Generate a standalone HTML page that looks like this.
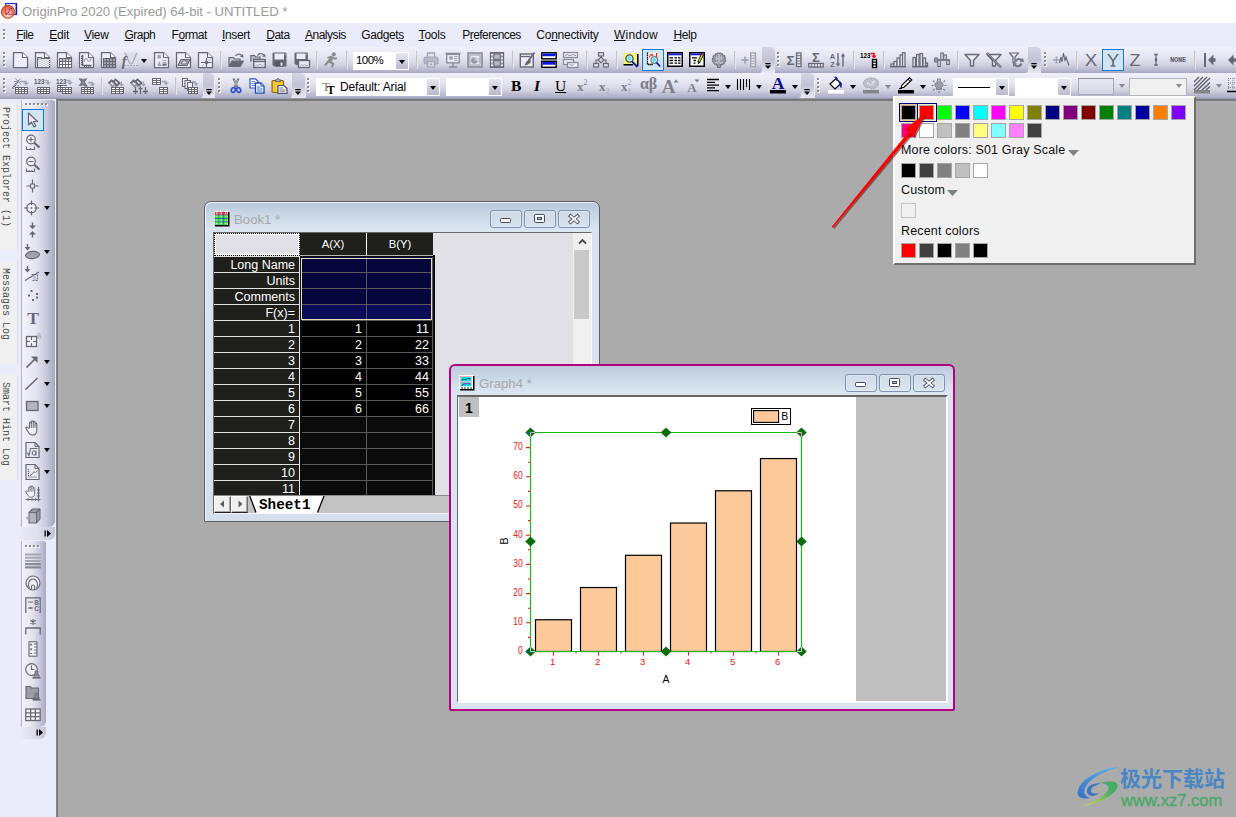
<!DOCTYPE html>
<html lang="en"><head><meta charset="utf-8"><title>OriginPro 2020</title>
<style>
*{box-sizing:border-box;margin:0;padding:0}
html,body{width:1236px;height:817px;overflow:hidden}
body{background:#ababab;font-family:"Liberation Sans",sans-serif;font-size:12px;color:#000;position:relative}
.abs{position:absolute}
.t{position:absolute;white-space:nowrap;line-height:1}
#title{left:0;top:0;width:1236px;height:23px;background:#fff}
#menu{left:0;top:23px;width:1236px;height:24px;background:#ebecf9}
.mi{position:absolute;top:6px;font-size:12px;line-height:12px;white-space:nowrap;color:#101010;transform-origin:0 0}
.mi u{text-decoration:underline;text-underline-offset:1px}
.tbrow{position:absolute;left:0;width:1236px}
.tb{position:absolute;top:0;height:100%;background:linear-gradient(#f0f0fa 0%,#e5e5f1 40%,#d0d0e0 70%,#b4b4cb 92%,#a6a6c0 100%);border-radius:0 0 3px 0}
.cap{position:absolute;top:0;width:13px;height:100%;background:linear-gradient(#d4d4e4 0%,#c2c2d6 50%,#e8e8f4 100%);border-radius:0 5px 0 0}
.grip{position:absolute;width:3px;background:repeating-linear-gradient(#fff 0 1px,transparent 1px 4px) 1px 1px/2px 100% no-repeat,repeating-linear-gradient(#8e8e86 0 2px,transparent 2px 4px) 0 0/2px 100% no-repeat}
.sep{position:absolute;width:1px;background:#c6c5c2;box-shadow:1px 0 0 #e6e6f0}
.ic{position:absolute;overflow:visible}
.combo{position:absolute;background:#fff;height:18px}
.combo .btn{position:absolute;right:1px;top:1px;width:12px;bottom:1px;background:linear-gradient(#e6e6f0,#b9b9cd);}
.combo .btn:after,.dd:after{content:"";position:absolute;left:2.5px;top:6.5px;border:3.5px solid transparent;border-top:4px solid #000;border-bottom:0}
.dd{position:absolute;width:7px;height:4px}
.dd:after{left:0;top:0}
.dd.g:after{border-top-color:#8a8a8a}
.hl{position:absolute;background:#d1e5f5;border:1.5px solid #0f7ad8}

#dock{left:0;top:99px;width:57px;height:718px;background:#ebecf9}
.vtab{position:absolute;left:0;width:18px;background:#f0f0f0;border-right:1px solid #dcdce4}
.vtab span{position:absolute;left:12px;top:6px;transform-origin:0 0;transform:rotate(90deg) scale(1,1.18);font-family:"Liberation Mono",monospace;font-size:10px;line-height:12px;white-space:nowrap;color:#4c4c4c;letter-spacing:0}
.vtb{position:absolute;background:linear-gradient(90deg,#f2f2fb 0%,#e6e6f2 40%,#c8c8dc 75%,#a6a6be 100%)}
.win{position:absolute;border-radius:7px 7px 1px 1px}
.wbtn{position:absolute;width:32px;height:18px;border:1px solid #8192b0;border-radius:3px;background:linear-gradient(rgba(255,255,255,.18),rgba(255,255,255,.02));box-shadow:inset 0 0 0 1px rgba(255,255,255,.25)}
.wt{position:absolute;font-size:13.2px;line-height:14px;color:#a9a9a9;white-space:nowrap}
table.ws{position:absolute;border-collapse:separate;border-spacing:0;font-family:"Liberation Sans",sans-serif;font-size:12px;color:#fff}
.sw{position:absolute;width:15px;height:15px;border:1px solid #a6a6a6}
.pt{position:absolute;font-size:12.5px;line-height:13px;white-space:nowrap;color:#111;letter-spacing:.17px}
</style></head>
<body>
<div id="title" class="abs"><svg class="ic" style="left:0;top:0" width="20" height="22" viewBox="0 0 20 22">
<defs><radialGradient id="og" cx=".5" cy=".8" r=".75"><stop offset="0" stop-color="#fff0ea"/><stop offset=".3" stop-color="#fbb09a"/><stop offset=".6" stop-color="#f8805e"/><stop offset="1" stop-color="#e85a3c"/></radialGradient></defs>
<rect x="5.500" y="3.500" width="11" height="11" fill="#fff" stroke="#2434c4" stroke-width="1.200"/>
<path d="M16.300 3.500V14.500" stroke="#1018b0" stroke-width="1.600"/>
<path d="M9 4V14M12.500 4V14M6 7H16M6 10.500H16" stroke="#a8c8f4" stroke-width=".9"/>
<circle cx="7.900" cy="11.800" r="6.500" fill="url(#og)" stroke="#a83014" stroke-width=".9"/>
<path d="M5.400 6.500V14.300H13" fill="none" stroke="#e04630" stroke-width="1"/>
<circle cx="6.500" cy="13.500" r=".65" fill="#2434b4"/><circle cx="8.400" cy="12.400" r=".65" fill="#2434b4"/><circle cx="9.500" cy="9.500" r=".65" fill="#2434b4"/><circle cx="11.400" cy="8.500" r=".65" fill="#2434b4"/>
<path d="M6.500 13.500L8.400 12.400L9.500 9.500L11.400 8.500" fill="none" stroke="#5a50b8" stroke-width=".5"/>
</svg><span class="t" id="ttl" style="left:22px;top:5px;font-size:13.2px;color:#9a9a9a;letter-spacing:-0.05px">OriginPro 2020 (Expired) 64-bit - UNTITLED *</span></div>
<div id="menu" class="abs"><svg class="ic" style="left:3px;top:6px" width="3" height="12" viewBox="0 0 3 12"><rect x="1" y="1" width="2" height="2" fill="#fff"/><rect x="0" y="0" width="2" height="2" fill="#8c8c86"/><rect x="1" y="5" width="2" height="2" fill="#fff"/><rect x="0" y="4" width="2" height="2" fill="#8c8c86"/><rect x="1" y="9" width="2" height="2" fill="#fff"/><rect x="0" y="8" width="2" height="2" fill="#8c8c86"/></svg><span class="mi" id="m0" style="left:16.3px;letter-spacing:-0.550px"><u>F</u>ile</span><span class="mi" id="m1" style="left:49.3px;letter-spacing:-0.200px"><u>E</u>dit</span><span class="mi" id="m2" style="left:84px;letter-spacing:-0.300px"><u>V</u>iew</span><span class="mi" id="m3" style="left:124.5px;letter-spacing:-0.520px"><u>G</u>raph</span><span class="mi" id="m4" style="left:171.6px;letter-spacing:-0.467px">F<u>o</u>rmat</span><span class="mi" id="m5" style="left:222px;letter-spacing:-0.333px"><u>I</u>nsert</span><span class="mi" id="m6" style="left:266.3px;letter-spacing:-0.525px"><u>D</u>ata</span><span class="mi" id="m7" style="left:304.9px;letter-spacing:-0.463px"><u>A</u>nalysis</span><span class="mi" id="m8" style="left:361.2px;letter-spacing:-0.386px">Gadget<u>s</u></span><span class="mi" id="m9" style="left:418.6px;letter-spacing:-0.220px"><u>T</u>ools</span><span class="mi" id="m10" style="left:462.3px;letter-spacing:-0.573px">P<u>r</u>eferences</span><span class="mi" id="m11" style="left:536.3px;letter-spacing:-0.258px">Co<u>n</u>nectivity</span><span class="mi" id="m12" style="left:614px;letter-spacing:0.217px"><u>W</u>indow</span><span class="mi" id="m13" style="left:673.4px;letter-spacing:-0.400px"><u>H</u>elp</span></div>
<div class="tbrow" style="top:47px;height:26px;background:#e9e9f5"><div class="tb" style="left:0;width:762px"></div><div class="cap" style="left:762px;width:13px"></div><svg class="ic" style="left:765px;top:16px" width="6" height="6" viewBox="0 0 6 6"><path d="M0.300 0H5.700V1.300H0.300Z M0 2.600H6L3 6Z" fill="#000"/></svg><svg class="ic" style="left:3px;top:5px" width="3" height="16" viewBox="0 0 3 16"><rect x="1" y="1" width="2" height="2" fill="#fff"/><rect x="0" y="0" width="2" height="2" fill="#8c8c86"/><rect x="1" y="5" width="2" height="2" fill="#fff"/><rect x="0" y="4" width="2" height="2" fill="#8c8c86"/><rect x="1" y="9" width="2" height="2" fill="#fff"/><rect x="0" y="8" width="2" height="2" fill="#8c8c86"/><rect x="1" y="13" width="2" height="2" fill="#fff"/><rect x="0" y="12" width="2" height="2" fill="#8c8c86"/></svg><svg class="ic" style="left:13px;top:5px" width="16" height="16" viewBox="0 0 16 16"><path d="M0.5 0.5H9.5L14.5 5.5V15.5H0.5Z" fill="#eeeefa" stroke="#686874" stroke-width="1.25"/><path d="M9.5 0.5V5.5H14.5" fill="#f8f8fd" stroke="#686874" stroke-width="1.1"/></svg><svg class="ic" style="left:35px;top:5px" width="16" height="16" viewBox="0 0 16 16"><path d="M0.5 0.5H9.5L14.5 5.5V15.5H0.5Z" fill="#eeeefa" stroke="#686874" stroke-width="1.25"/><path d="M9.5 0.5V5.5H14.5" fill="#f8f8fd" stroke="#686874" stroke-width="1.1"/><path d="M2.500 15.500V5.500H6.500V6.500H14.500V15.500Z" fill="#cacad4" stroke="#686874" stroke-width="1.150"/><rect x="7" y="7" width="1" height="1" fill="#f6f6fb"/><rect x="10" y="7" width="1" height="1" fill="#f6f6fb"/><rect x="11" y="7" width="1" height="1" fill="#f6f6fb"/><rect x="14" y="7" width="1" height="1" fill="#f6f6fb"/><rect x="4" y="8" width="1" height="1" fill="#f6f6fb"/><rect x="5" y="8" width="1" height="1" fill="#f6f6fb"/><rect x="8" y="8" width="1" height="1" fill="#f6f6fb"/><rect x="9" y="8" width="1" height="1" fill="#f6f6fb"/><rect x="12" y="8" width="1" height="1" fill="#f6f6fb"/><rect x="13" y="8" width="1" height="1" fill="#f6f6fb"/><rect x="3" y="9" width="1" height="1" fill="#f6f6fb"/><rect x="6" y="9" width="1" height="1" fill="#f6f6fb"/><rect x="7" y="9" width="1" height="1" fill="#f6f6fb"/><rect x="10" y="9" width="1" height="1" fill="#f6f6fb"/><rect x="11" y="9" width="1" height="1" fill="#f6f6fb"/><rect x="14" y="9" width="1" height="1" fill="#f6f6fb"/><rect x="4" y="10" width="1" height="1" fill="#f6f6fb"/><rect x="5" y="10" width="1" height="1" fill="#f6f6fb"/><rect x="8" y="10" width="1" height="1" fill="#f6f6fb"/><rect x="9" y="10" width="1" height="1" fill="#f6f6fb"/><rect x="12" y="10" width="1" height="1" fill="#f6f6fb"/><rect x="13" y="10" width="1" height="1" fill="#f6f6fb"/><rect x="3" y="11" width="1" height="1" fill="#f6f6fb"/><rect x="6" y="11" width="1" height="1" fill="#f6f6fb"/><rect x="7" y="11" width="1" height="1" fill="#f6f6fb"/><rect x="10" y="11" width="1" height="1" fill="#f6f6fb"/><rect x="11" y="11" width="1" height="1" fill="#f6f6fb"/><rect x="14" y="11" width="1" height="1" fill="#f6f6fb"/><rect x="4" y="12" width="1" height="1" fill="#f6f6fb"/><rect x="5" y="12" width="1" height="1" fill="#f6f6fb"/><rect x="8" y="12" width="1" height="1" fill="#f6f6fb"/><rect x="9" y="12" width="1" height="1" fill="#f6f6fb"/><rect x="12" y="12" width="1" height="1" fill="#f6f6fb"/><rect x="13" y="12" width="1" height="1" fill="#f6f6fb"/><rect x="3" y="13" width="1" height="1" fill="#f6f6fb"/><rect x="6" y="13" width="1" height="1" fill="#f6f6fb"/><rect x="7" y="13" width="1" height="1" fill="#f6f6fb"/><rect x="10" y="13" width="1" height="1" fill="#f6f6fb"/><rect x="11" y="13" width="1" height="1" fill="#f6f6fb"/><rect x="14" y="13" width="1" height="1" fill="#f6f6fb"/><rect x="4" y="14" width="1" height="1" fill="#f6f6fb"/><rect x="5" y="14" width="1" height="1" fill="#f6f6fb"/><rect x="8" y="14" width="1" height="1" fill="#f6f6fb"/><rect x="9" y="14" width="1" height="1" fill="#f6f6fb"/><rect x="12" y="14" width="1" height="1" fill="#f6f6fb"/><rect x="13" y="14" width="1" height="1" fill="#f6f6fb"/></svg><svg class="ic" style="left:57px;top:5px" width="16" height="16" viewBox="0 0 16 16"><path d="M0.5 0.5H9.5L14.5 5.5V15.5H0.5Z" fill="#eeeefa" stroke="#686874" stroke-width="1.25"/><path d="M9.5 0.5V5.5H14.5" fill="#f8f8fd" stroke="#686874" stroke-width="1.1"/><rect x="2" y="6" width="13" height="10" fill="#686874"/><rect x="3" y="7" width="2" height="2" fill="#c4c4d0"/><rect x="6" y="7" width="2" height="2" fill="#c4c4d0"/><rect x="9" y="7" width="2" height="2" fill="#c4c4d0"/><rect x="12" y="7" width="2" height="2" fill="#c4c4d0"/><rect x="3" y="10" width="2" height="2" fill="#fff"/><rect x="6" y="10" width="2" height="2" fill="#fff"/><rect x="9" y="10" width="2" height="2" fill="#fff"/><rect x="12" y="10" width="2" height="2" fill="#fff"/><rect x="3" y="13" width="2" height="2" fill="#fff"/><rect x="6" y="13" width="2" height="2" fill="#fff"/><rect x="9" y="13" width="2" height="2" fill="#fff"/><rect x="12" y="13" width="2" height="2" fill="#fff"/></svg><svg class="ic" style="left:79px;top:5px" width="16" height="16" viewBox="0 0 16 16"><path d="M0.5 0.5H9.5L14.5 5.5V15.5H0.5Z" fill="#eeeefa" stroke="#686874" stroke-width="1.25"/><path d="M9.5 0.5V5.5H14.5" fill="#f8f8fd" stroke="#686874" stroke-width="1.1"/><path d="M3.500 3V13.500H12.500" fill="none" stroke="#686874" stroke-width="1.600"/><path d="M2 4.500H3M2 6.500H3M2 8.500H3M2 10.500H3M2 12.500H3M5.500 14V15M7.500 14V15M9.500 14V15M11.500 14V15" stroke="#686874" stroke-width="1"/><path d="M5 10C6 6 7.500 5.500 8.500 8S11 10 12.500 5.500" fill="none" stroke="#a0a0ae" stroke-width="1.100"/></svg><svg class="ic" style="left:101px;top:5px" width="16" height="16" viewBox="0 0 16 16"><path d="M0.5 0.5H9.5L14.5 5.5V15.5H0.5Z" fill="#eeeefa" stroke="#686874" stroke-width="1.25"/><path d="M9.5 0.5V5.5H14.5" fill="#f8f8fd" stroke="#686874" stroke-width="1.1"/><rect x="2" y="6" width="13" height="10" fill="#686874"/><rect x="3" y="7" width="2" height="2" fill="#a2a2ae"/><rect x="6" y="7" width="2" height="2" fill="#a2a2ae"/><rect x="9" y="7" width="2" height="2" fill="#a2a2ae"/><rect x="12" y="7" width="2" height="2" fill="#a2a2ae"/><rect x="3" y="10" width="2" height="2" fill="#a2a2ae"/><rect x="6" y="10" width="2" height="2" fill="#a2a2ae"/><rect x="9" y="10" width="2" height="2" fill="#a2a2ae"/><rect x="12" y="10" width="2" height="2" fill="#a2a2ae"/><rect x="3" y="13" width="2" height="2" fill="#a2a2ae"/><rect x="6" y="13" width="2" height="2" fill="#a2a2ae"/><rect x="9" y="13" width="2" height="2" fill="#a2a2ae"/><rect x="12" y="13" width="2" height="2" fill="#a2a2ae"/></svg><svg class="ic" style="left:121px;top:5px" width="18" height="16" viewBox="0 0 18 16"><rect x="3" y="0.500" width="14" height="14" fill="#dedeea"/><path d="M3.500 1C6 1 7 12 10 12S14 1 16.500 1" fill="none" stroke="#a4a4b2" stroke-width="1.200"/><path d="M3 13.500H17" stroke="#a4a4b2" stroke-width="1" stroke-dasharray="2 1"/><text x="3" y="14" font-family="Liberation Serif,serif" font-size="14" font-weight="bold" text-anchor="middle" fill="#686874" font-style="italic">f</text></svg><div class="dd" style="left:141px;top:12px"></div><svg class="ic" style="left:154px;top:5px" width="16" height="16" viewBox="0 0 16 16"><path d="M0.5 0.5H9.5L14.5 5.5V15.5H0.5Z" fill="#eeeefa" stroke="#686874" stroke-width="1.25"/><path d="M9.5 0.5V5.5H14.5" fill="#f8f8fd" stroke="#686874" stroke-width="1.1"/><rect x="3.5" y="3" width="3.5" height="3.500" fill="#a4a4b2"/><path d="M3.5 13L5.5 9L7 13Z" fill="#a4a4b2"/><path d="M8.5 8.500H12.500M8.5 10.500H12.500M3.5 13.500H12.500" stroke="#a4a4b2" stroke-width="1.1"/><rect x="8.5" y="11.5" width="4" height="2" fill="#686874"/></svg><svg class="ic" style="left:176px;top:5px" width="16" height="16" viewBox="0 0 16 16"><path d="M0.5 0.5H9.5L14.5 5.5V15.5H0.5Z" fill="#eeeefa" stroke="#686874" stroke-width="1.25"/><path d="M9.5 0.5V5.5H14.5" fill="#f8f8fd" stroke="#686874" stroke-width="1.1"/><path d="M5 7.500H14L11 13.500H2Z" fill="#c4c4d0" stroke="#686874" stroke-width="1.2"/><path d="M6.5 9H11.500L10 12H5Z" fill="#e6e6f0" stroke="#686874" stroke-width="1"/></svg><svg class="ic" style="left:198px;top:5px" width="16" height="16" viewBox="0 0 16 16"><path d="M0.5 0.5H9.5L14.5 5.5V15.5H0.5Z" fill="#eeeefa" stroke="#686874" stroke-width="1.25"/><path d="M9.5 0.5V5.5H14.5" fill="#f8f8fd" stroke="#686874" stroke-width="1.1"/><path d="M8.5 6V15M3 10.500H13.500" stroke="#686874" stroke-width="1.1"/><circle cx="8.500" cy="10.500" r="1.500" fill="none" stroke="#686874" stroke-width="1"/><path d="M10.500 8.500L13 6.500M4 14L6 12.500" stroke="#a4a4b2" stroke-width="1.2" stroke-dasharray="1 1"/></svg><div class="sep" style="left:220px;top:4px;height:18px"></div><svg class="ic" style="left:228px;top:5px" width="16" height="16" viewBox="0 0 16 16"><path d="M1 14.500V5.500H5.500L6.500 7H12V9" fill="#c6c6d2" stroke="#686874" stroke-width="1.200"/><path d="M1 14.500L4 9H15.500L12.500 14.500Z" fill="#686874" stroke="#686874" stroke-width="1"/><path d="M7.500 4C9 1.500 12 1.500 13.500 3.500" fill="none" stroke="#686874" stroke-width="1.300"/><path d="M12 4.800L15.500 5.500L15 2Z" fill="#686874"/></svg><svg class="ic" style="left:250px;top:5px" width="16" height="16" viewBox="0 0 16 16"><path d="M0.800 9.500V3.500H4.500L5.500 5H10V7" fill="#b4b4c2" stroke="#686874" stroke-width="1.200"/><path d="M7.500 3.500C9 1.200 12 1.200 13.500 3" fill="none" stroke="#686874" stroke-width="1.300"/><path d="M12 4.500L15.500 5L15 1.800Z" fill="#686874"/><rect x="3.700" y="7.500" width="11.600" height="8" fill="#e8e8f2" stroke="#686874" stroke-width="1.400"/><path d="M3.700 9.500H15.300" stroke="#686874" stroke-width="1.300"/><path d="M5.500 14L7 12.500L8.500 13.500L10 12L11.500 13.500L13.500 13" fill="none" stroke="#a4a4b2" stroke-width=".9"/></svg><svg class="ic" style="left:272px;top:5px" width="16" height="16" viewBox="0 0 16 16"><path d="M0.500 1.500Q0.500 0.500 1.500 0.500H13.500Q14.500 0.500 14.500 1.500V14.500H2L0.500 13Z" fill="#686874"/><rect x="2.500" y="1.500" width="9.500" height="6" fill="#ececf6"/><rect x="3.500" y="9.500" width="8" height="5" fill="#54545f"/><rect x="8.500" y="10.500" width="2" height="3.200" fill="#e4e4ee"/><rect x="12.800" y="1.800" width="1" height="1.200" fill="#d8d8e4"/></svg><svg class="ic" style="left:294px;top:5px" width="16" height="16" viewBox="0 0 16 16"><path d="M0.500 1.500Q0.500 0.500 1.500 0.500H13Q14 0.500 14 1.500V13H2L0.500 11.500Z" fill="#686874"/><rect x="2.500" y="1.500" width="9" height="5.500" fill="#ececf6"/><rect x="12.300" y="1.800" width="1" height="1.200" fill="#d8d8e4"/><rect x="4.500" y="8.500" width="11" height="7" fill="#e8e8f2" stroke="#686874" stroke-width="1.300"/><path d="M6 14L7.500 12.800L9 13.600L10.500 12.500L12 13.600L14 13.200" fill="none" stroke="#a4a4b2" stroke-width=".9"/></svg><div class="sep" style="left:316px;top:4px;height:18px"></div><svg class="ic" style="left:323px;top:5px" width="16" height="16" viewBox="0 0 16 16"><circle cx="10.800" cy="2.300" r="2.100" fill="#8e8e8e"/><path d="M4 5L8.500 3.800L11.500 5.500L13.500 5.200L14.500 6.800L11.800 7.800L10 7L8.800 9.500L11.500 11.500L10 15.500H7.800L8.800 12.300L5.800 10.800L3.500 13.500H0.800L4.500 8.800L6.500 5.800L4.800 6.800Z" fill="#8e8e8e"/></svg><div class="sep" style="left:346px;top:4px;height:18px"></div><div class="combo" style="left:353px;top:5px;width:56px;height:18px"><span class="t" style="left:3px;top:3px;font-size:11.5px;letter-spacing:-0.55px">100%</span><div class="btn"></div></div><div class="sep" style="left:416px;top:4px;height:18px"></div><svg class="ic" style="left:423px;top:5px" width="16" height="16" viewBox="0 0 16 16"><path d="M4.500 5V1H11.500V5" fill="#e4e4ee" stroke="#a4a4b2" stroke-width="1.300"/><rect x="1" y="5" width="14" height="7" rx="2" fill="#b9b9c6" stroke="#a4a4b2" stroke-width="1.200"/><rect x="4.500" y="9.500" width="7" height="5.500" fill="#d8d8e4" stroke="#a4a4b2" stroke-width="1.200"/><rect x="7" y="11.500" width="2" height="1.500" fill="#a4a4b2"/></svg><svg class="ic" style="left:445px;top:5px" width="16" height="16" viewBox="0 0 16 16"><path d="M0.500 1.500H15.500" stroke="#8a8a96" stroke-width="1.600"/><rect x="1.700" y="2.300" width="12.600" height="8.500" fill="#e9e9f3" stroke="#8a8a96" stroke-width="1.300"/><circle cx="6" cy="6" r="2" fill="#a4a4b2"/><path d="M9 4.500H12.500M9 6.500H12.500M9 8.500H12.500" stroke="#a4a4b2" stroke-width="1"/><path d="M8 10.800V14.500M4 15H12" stroke="#8a8a96" stroke-width="1.500"/></svg><svg class="ic" style="left:467px;top:5px" width="16" height="16" viewBox="0 0 16 16"><rect x="1" y="1" width="14" height="14" fill="#d8d8e2" stroke="#8c8c98" stroke-width="1.600"/><rect x="3" y="3" width="10" height="10" fill="#e6e6f0" stroke="#a6a6b2" stroke-width="1"/><circle cx="7.300" cy="8.500" r="3.200" fill="#9a9aa6"/><path d="M7.300 8.500V5.300A3.200 3.200 0 0 1 10.500 8.500Z" fill="#c8c8d4"/><path d="M11.500 7H12.500M11.500 9.500H12.500" stroke="#8c8c98" stroke-width="1"/></svg><svg class="ic" style="left:489px;top:5px" width="16" height="16" viewBox="0 0 16 16"><rect x="1.500" y="0.700" width="13" height="14.600" fill="#9e9eab" stroke="#686874" stroke-width="1.300"/><rect x="4.800" y="2" width="6.400" height="5.300" fill="#b9b9c6" stroke="#686874" stroke-width="1"/><rect x="4.800" y="8.700" width="6.400" height="5.300" fill="#b9b9c6" stroke="#686874" stroke-width="1"/><path d="M2.200 2H3.800V3.600H2.200ZM2.200 5.600H3.800V7.200H2.200ZM2.200 9H3.800V10.600H2.200ZM2.200 12.400H3.800V14H2.200ZM12.200 2H13.800V3.600H12.200ZM12.200 5.600H13.800V7.200H12.200ZM12.200 9H13.800V10.600H12.200ZM12.200 12.400H13.800V14H12.200Z" fill="#fff"/></svg><div class="sep" style="left:512px;top:4px;height:18px"></div><svg class="ic" style="left:519px;top:5px" width="16" height="16" viewBox="0 0 16 16"><rect x="1.300" y="2" width="13" height="13" fill="#ebebf5" stroke="#686874" stroke-width="1.400"/><path d="M1.300 4.500H11" stroke="#686874" stroke-width="1.300"/><path d="M15.500 0.500L9.500 8.500" stroke="#686874" stroke-width="1.800"/><path d="M10.500 7.500C8 8 6.500 10.500 5.500 13.500C9 13 11.500 11.500 12 9Z" fill="#686874"/></svg><svg class="ic" style="left:541px;top:5px" width="16" height="16" viewBox="0 0 16 16"><rect x="0.800" y="0.800" width="14.400" height="6" fill="#fff" stroke="#000" stroke-width="1.400"/><rect x="1.500" y="1.500" width="13" height="2.700" fill="#0a18d8"/><rect x="0.800" y="9.300" width="14.400" height="6" fill="#fff" stroke="#000" stroke-width="1.400"/><rect x="1.500" y="10" width="13" height="2.700" fill="#0a18d8"/></svg><svg class="ic" style="left:563px;top:5px" width="16" height="16" viewBox="0 0 16 16"><rect x="0.500" y="0.500" width="14" height="5" fill="#ececf6" stroke="#8a8a96" stroke-width="1.200"/><path d="M2 3.500L4.500 2.500L7 3.800L9.500 2.500L13 3.500" fill="none" stroke="#8a8a96" stroke-width=".9"/><rect x="0.500" y="7.500" width="10" height="5" fill="#ececf6" stroke="#8a8a96" stroke-width="1.200"/><rect x="4.500" y="10.500" width="10.500" height="5" fill="#ececf6" stroke="#8a8a96" stroke-width="1.200"/><path d="M6 11.500L8.500 14L11 11.500" fill="none" stroke="#8a8a96" stroke-width=".9"/></svg><div class="sep" style="left:586px;top:4px;height:18px"></div><svg class="ic" style="left:593px;top:5px" width="16" height="16" viewBox="0 0 16 16"><rect x="5.500" y="0.700" width="5" height="3.300" fill="#e4e4ee" stroke="#686874" stroke-width="1.200"/><path d="M8 4V5" stroke="#686874" stroke-width="1.200"/><path d="M8 5L11 8L8 11L5 8Z" fill="#d4d4de" stroke="#686874" stroke-width="1.100"/><path d="M5 8H3V11.500M11 8H13V11.500" fill="none" stroke="#686874" stroke-width="1.200"/><rect x="0.700" y="11.500" width="4.800" height="3.500" fill="#e4e4ee" stroke="#686874" stroke-width="1.200"/><rect x="10.500" y="11.500" width="4.800" height="3.500" fill="#e4e4ee" stroke="#686874" stroke-width="1.200"/></svg><div class="sep" style="left:616px;top:4px;height:18px"></div><svg class="ic" style="left:623px;top:5px" width="16" height="16" viewBox="0 0 16 16"><rect x="1" y="1.500" width="13" height="10.500" fill="#f7f48c" stroke="#f0ea30" stroke-width="1" stroke-dasharray="1 1"/><path d="M0.500 12.800H10M14.800 2V14" stroke="#000" stroke-width="1.500"/><circle cx="6.500" cy="6.500" r="3.600" fill="#c4f6f8" stroke="#505050" stroke-width="1.300"/><circle cx="6.500" cy="6.500" r="2" fill="#6ce4ee"/><path d="M9 9.500L14.500 15" stroke="#0a18c0" stroke-width="1.800"/></svg><div class="hl" style="left:642px;top:2px;width:22px;height:22px"></div><svg class="ic" style="left:645px;top:5px" width="16" height="16" viewBox="0 0 16 16"><rect x="3" y="1" width="9" height="10" fill="#fff"/><path d="M2.500 0.500V12.500H8" fill="none" stroke="#000" stroke-width="1.300" stroke-dasharray="1.500 .6"/><path d="M4.500 5.500C5 2 7.500 1.500 8 4M11.500 1V6" fill="none" stroke="#f01818" stroke-width="1.200"/><circle cx="9.300" cy="8" r="3.300" fill="#a8f0f4" stroke="#808080" stroke-width="1.300"/><circle cx="9.300" cy="8" r="1.800" fill="#5ce0ec"/><path d="M11.500 10.500L15.200 14.500" stroke="#0a18c0" stroke-width="1.800"/></svg><svg class="ic" style="left:667px;top:5px" width="16" height="16" viewBox="0 0 16 16"><rect x="0.750" y="0.750" width="14.500" height="13.500" fill="#fff" stroke="#000" stroke-width="1.500"/><rect x="1.500" y="1.500" width="13" height="1.800" fill="#0a18d0"/><path d="M2.500 5.800H6M7.500 5.800H10M11 5.800H13.500M2.500 8.500H6M7.500 8.500H10M11 8.500H13.500M2.500 11.200H6M7.500 11.200H10M11 11.200H13.500" stroke="#000" stroke-width="1.300"/></svg><svg class="ic" style="left:689px;top:5px" width="16" height="16" viewBox="0 0 16 16"><rect x="0.750" y="0.750" width="14.500" height="13.500" fill="#fff" stroke="#000" stroke-width="1.500"/><rect x="1.500" y="1.500" width="13" height="1.800" fill="#0a18d0"/><path d="M3 5.800H8M4.500 8.500H7M4.500 11.200H6.500" stroke="#000" stroke-width="1.300"/><path d="M13.500 2.500L9.500 10.500" stroke="#000" stroke-width="3"/><path d="M13.300 3L10 9.500" stroke="#f0e020" stroke-width="1.500"/><circle cx="13.600" cy="2.300" r="1" fill="#e02020"/><path d="M9 10L8.800 12.500L10.500 11Z" fill="#000"/></svg><svg class="ic" style="left:711px;top:5px" width="16" height="16" viewBox="0 0 16 16"><path d="M8 1.500C6.500 0.500 4.500 1.500 4.300 3C2.500 3 1.300 4.800 2 6.300C0.800 7.500 1.300 9.800 2.800 10.300C2.800 12.300 4.800 13.300 6 12.500C6.800 14.300 9.200 14.300 10 12.500C11.200 13.300 13.200 12.300 13.200 10.300C14.700 9.800 15.200 7.500 14 6.300C14.700 4.800 13.500 3 11.700 3C11.500 1.500 9.500 0.500 8 1.500Z" fill="#9a9aa6" stroke="#72727e" stroke-width="1.300" stroke-dasharray="2.200 .600"/><path d="M8 2V11M5 4.500C6.500 5.500 6.500 7 5 8M11 4.500C9.500 5.500 9.500 7 11 8M4.500 10.500C6 10 6.500 11 6.500 12M11.500 10.500C10 10 9.500 11 9.500 12" fill="none" stroke="#dcdce6" stroke-width="1"/><path d="M6.500 12.500V15.500H9.500V12.500" fill="#9a9aa6" stroke="#72727e" stroke-width="1"/></svg><div class="sep" style="left:734px;top:4px;height:18px"></div><svg class="ic" style="left:741px;top:5px" width="16" height="16" viewBox="0 0 16 16"><path d="M0.500 8H7.500M4 4.500V11.500" stroke="#a4a4b2" stroke-width="1.800"/><rect x="9.700" y="1" width="4.800" height="13.500" fill="#ececf4" stroke="#a4a4b2" stroke-width="1.400"/><path d="M9.700 3.700H14.500M9.700 6.400H14.500M9.700 9.100H14.500M9.700 11.800H14.500" stroke="#a4a4b2" stroke-width="1.100"/></svg><div class="tb" style="left:775px;width:253px"></div><div class="cap" style="left:1028px;width:13px"></div><svg class="ic" style="left:1031px;top:16px" width="6" height="6" viewBox="0 0 6 6"><path d="M0.300 0H5.700V1.300H0.300Z M0 2.600H6L3 6Z" fill="#000"/></svg><svg class="ic" style="left:777px;top:5px" width="3" height="16" viewBox="0 0 3 16"><rect x="1" y="1" width="2" height="2" fill="#fff"/><rect x="0" y="0" width="2" height="2" fill="#8c8c86"/><rect x="1" y="5" width="2" height="2" fill="#fff"/><rect x="0" y="4" width="2" height="2" fill="#8c8c86"/><rect x="1" y="9" width="2" height="2" fill="#fff"/><rect x="0" y="8" width="2" height="2" fill="#8c8c86"/><rect x="1" y="13" width="2" height="2" fill="#fff"/><rect x="0" y="12" width="2" height="2" fill="#8c8c86"/></svg><svg class="ic" style="left:786px;top:5px" width="16" height="16" viewBox="0 0 16 16"><text x="4.5" y="13" font-family="Liberation Sans,sans-serif" font-size="13.5" font-weight="bold" text-anchor="middle" fill="#686874" >&#931;</text><rect x="10.500" y="1" width="4.500" height="13.500" fill="#ececf4" stroke="#686874" stroke-width="1.300"/><path d="M10.500 3.700H15M10.500 6.400H15M10.500 9.100H15M10.500 11.800H15" stroke="#686874" stroke-width="1"/></svg><svg class="ic" style="left:808px;top:5px" width="16" height="16" viewBox="0 0 16 16"><text x="8" y="10" font-family="Liberation Sans,sans-serif" font-size="13" font-weight="bold" text-anchor="middle" fill="#686874" >&#931;</text><rect x="0.800" y="11.500" width="14.400" height="3.500" fill="#ececf4" stroke="#686874" stroke-width="1.300"/><path d="M3.700 11.500V15M6.600 11.500V15M9.500 11.500V15M12.400 11.500V15" stroke="#686874" stroke-width="1"/></svg><svg class="ic" style="left:830px;top:5px" width="16" height="16" viewBox="0 0 16 16"><text x="2.5" y="7" font-family="Liberation Sans,sans-serif" font-size="7.5" font-weight="bold" text-anchor="middle" fill="#686874" >A</text><text x="2.5" y="14.5" font-family="Liberation Sans,sans-serif" font-size="7.5" font-weight="bold" text-anchor="middle" fill="#686874" >Z</text><path d="M8 1V13" stroke="#686874" stroke-width="1.400"/><path d="M5.800 11.500H10.200L8 14.800Z" fill="#686874"/><path d="M13 14.500V3" stroke="#686874" stroke-width="1.400"/><path d="M10.800 4.500H15.200L13 1Z" fill="#686874"/></svg><div class="sep" style="left:853px;top:4px;height:18px"></div><svg class="ic" style="left:860px;top:5px" width="16" height="16" viewBox="0 0 16 16"><text x="0" y="6" font-family="Liberation Sans,sans-serif" font-size="7.2" font-weight="bold" text-anchor="start" fill="#000" textLength="10.500" lengthAdjust="spacingAndGlyphs">123</text><path d="M10.500 1.500H14V4" fill="none" stroke="#e81010" stroke-width="1.500"/><path d="M11.300 3.500H16.700L14 6.500Z" fill="#e81010"/><rect x="12.500" y="7.500" width="4" height="8" fill="#fff" stroke="#000" stroke-width="1.400"/><path d="M12.500 10.200H16.500M12.500 12.900H16.500" stroke="#000" stroke-width="1.300"/></svg><div class="sep" style="left:883px;top:4px;height:18px"></div><svg class="ic" style="left:890px;top:5px" width="16" height="16" viewBox="0 0 16 16"><rect x="1" y="12" width="3" height="2.5" fill="#e4e4ee" stroke="#686874" stroke-width="1.200"/><rect x="4" y="9.5" width="3" height="5.0" fill="#e4e4ee" stroke="#686874" stroke-width="1.200"/><rect x="7" y="6" width="3" height="8.5" fill="#e4e4ee" stroke="#686874" stroke-width="1.200"/><rect x="10" y="3" width="3" height="11.5" fill="#e4e4ee" stroke="#686874" stroke-width="1.200"/><rect x="12.5" y="0.7" width="2.5" height="13.8" fill="#e4e4ee" stroke="#686874" stroke-width="1.200"/><path d="M0 14.800H16" stroke="#686874" stroke-width="1.200"/></svg><svg class="ic" style="left:912px;top:5px" width="16" height="16" viewBox="0 0 16 16"><rect x="1" y="5.5" width="2.5" height="9.0" fill="#e4e4ee" stroke="#686874" stroke-width="1.200"/><rect x="4.5" y="2.5" width="2.5" height="12.0" fill="#e4e4ee" stroke="#686874" stroke-width="1.200"/><rect x="8" y="1.5" width="2.5" height="13.0" fill="#e4e4ee" stroke="#686874" stroke-width="1.200"/><rect x="11" y="6" width="2.5" height="8.5" fill="#e4e4ee" stroke="#686874" stroke-width="1.200"/><rect x="13.5" y="11" width="2" height="3.5" fill="#e4e4ee" stroke="#686874" stroke-width="1.200"/><path d="M0 14.800H16" stroke="#686874" stroke-width="1.200"/></svg><svg class="ic" style="left:934px;top:5px" width="16" height="16" viewBox="0 0 16 16"><rect x="0.800" y="6" width="2.500" height="4" fill="#e4e4ee" stroke="#686874" stroke-width="1.100"/><rect x="3.800" y="8" width="2.500" height="6.500" fill="#e4e4ee" stroke="#686874" stroke-width="1.100"/><rect x="6.800" y="1" width="2.500" height="7" fill="#e4e4ee" stroke="#686874" stroke-width="1.100"/><rect x="9.800" y="3" width="2.500" height="5" fill="#e4e4ee" stroke="#686874" stroke-width="1.100"/><rect x="12.800" y="8" width="2.500" height="4.500" fill="#e4e4ee" stroke="#686874" stroke-width="1.100"/><path d="M0 8H16" stroke="#686874" stroke-width="1"/></svg><div class="sep" style="left:957px;top:4px;height:18px"></div><svg class="ic" style="left:964px;top:5px" width="16" height="16" viewBox="0 0 16 16"><path d="M1 2.5H15L9.5 8.5V14H6.5V8.5Z" fill="#ececf4" stroke="#686874" stroke-width="1.400" stroke-linejoin="round"/></svg><svg class="ic" style="left:986px;top:5px" width="16" height="16" viewBox="0 0 16 16"><path d="M1 2.5H15L9.5 8.5V14H6.5V8.5Z" fill="#ececf4" stroke="#686874" stroke-width="1.400" stroke-linejoin="round"/><path d="M1 1L15 15.500" stroke="#686874" stroke-width="2.200"/><path d="M1 1L15 15.500" stroke="#a8a8b4" stroke-width=".8"/></svg><svg class="ic" style="left:1008px;top:5px" width="16" height="16" viewBox="0 0 16 16"><path d="M1.500 1H10.500L7 5V10.500H5V5Z" fill="#ececf4" stroke="#686874" stroke-width="1.200" stroke-linejoin="round"/><path d="M7.500 9.500C9 6 13 6.500 14 9.500" fill="none" stroke="#787884" stroke-width="2"/><path d="M11.800 9.800L16 10L15 6Z" fill="#787884"/><path d="M13.500 11.500C12 15 8 15 6.500 12" fill="none" stroke="#787884" stroke-width="2"/><path d="M9 11.500L4.800 11L5.500 15Z" fill="#787884"/></svg><div class="tb" style="left:1041px;width:195px;border-radius:0"></div><svg class="ic" style="left:1044px;top:5px" width="3" height="16" viewBox="0 0 3 16"><rect x="1" y="1" width="2" height="2" fill="#fff"/><rect x="0" y="0" width="2" height="2" fill="#8c8c86"/><rect x="1" y="5" width="2" height="2" fill="#fff"/><rect x="0" y="4" width="2" height="2" fill="#8c8c86"/><rect x="1" y="9" width="2" height="2" fill="#fff"/><rect x="0" y="8" width="2" height="2" fill="#8c8c86"/><rect x="1" y="13" width="2" height="2" fill="#fff"/><rect x="0" y="12" width="2" height="2" fill="#8c8c86"/></svg><svg class="ic" style="left:1053px;top:5px" width="16" height="16" viewBox="0 0 16 16"><path d="M0 8H7M3.500 4.500V11.500" stroke="#a4a4b2" stroke-width="1.700"/><path d="M6.500 11L8 5L9 10L10.500 1L12 9L13 5L14 8L16 13.500" fill="none" stroke="#686874" stroke-width="1.100"/></svg><div class="sep" style="left:1076px;top:4px;height:18px"></div><svg class="ic" style="left:1083px;top:5px" width="16" height="16" viewBox="0 0 16 16"><text x="8" y="13.5" font-family="Liberation Sans,sans-serif" font-size="16" font-weight="normal" text-anchor="middle" fill="#686874" textLength="12.500" lengthAdjust="spacingAndGlyphs">X</text></svg><div class="hl" style="left:1102px;top:2px;width:22px;height:22px"></div><svg class="ic" style="left:1105px;top:5px" width="16" height="16" viewBox="0 0 16 16"><text x="8" y="13.5" font-family="Liberation Sans,sans-serif" font-size="16" font-weight="normal" text-anchor="middle" fill="#686874" textLength="12.500" lengthAdjust="spacingAndGlyphs">Y</text><path d="M5.500 14H10.500" stroke="#686874" stroke-width="1.400"/></svg><svg class="ic" style="left:1127px;top:5px" width="16" height="16" viewBox="0 0 16 16"><text x="8" y="13.5" font-family="Liberation Sans,sans-serif" font-size="16" font-weight="normal" text-anchor="middle" fill="#686874" textLength="11" lengthAdjust="spacingAndGlyphs">Z</text></svg><svg class="ic" style="left:1148px;top:5px" width="16" height="16" viewBox="0 0 16 16"><path d="M8 2.500V13M6.200 2.500H9.800M6.200 13H9.800" stroke="#686874" stroke-width="1.300"/><rect x="6.800" y="6.500" width="2.400" height="2.600" fill="#686874"/></svg><span class="t" style="left:1170px;top:10px;font-family:'Liberation Mono',monospace;font-weight:bold;font-size:7px;color:#5e5e6c;letter-spacing:-0.2px">NONE</span><div class="sep" style="left:1194px;top:4px;height:18px"></div><svg class="ic" style="left:1202px;top:5px" width="16" height="16" viewBox="0 0 16 16"><path d="M3 1V15" stroke="#686874" stroke-width="2"/><path d="M6 8L11.500 2.500V6.200H13.500V9.800H11.500V13.500Z" fill="#686874"/></svg><svg class="ic" style="left:1224px;top:5px" width="16" height="16" viewBox="0 0 16 16"><path d="M4 8L9.500 2.500V6.200H12V9.800H9.500V13.500Z" fill="#686874"/></svg></div>
<div class="tbrow" style="top:73px;height:25px;background:#e9e9f5"><div class="tb" style="left:0;width:203px"></div><div class="cap" style="left:203px;width:11px"></div><svg class="ic" style="left:206px;top:16px" width="6" height="6" viewBox="0 0 6 6"><path d="M0.300 0H5.700V1.300H0.300Z M0 2.600H6L3 6Z" fill="#000"/></svg><svg class="ic" style="left:3px;top:5px" width="3" height="16" viewBox="0 0 3 16"><rect x="1" y="1" width="2" height="2" fill="#fff"/><rect x="0" y="0" width="2" height="2" fill="#8c8c86"/><rect x="1" y="5" width="2" height="2" fill="#fff"/><rect x="0" y="4" width="2" height="2" fill="#8c8c86"/><rect x="1" y="9" width="2" height="2" fill="#fff"/><rect x="0" y="8" width="2" height="2" fill="#8c8c86"/><rect x="1" y="13" width="2" height="2" fill="#fff"/><rect x="0" y="12" width="2" height="2" fill="#8c8c86"/></svg><svg class="ic" style="left:12px;top:5px" width="16" height="16" viewBox="0 0 16 16"><path d="M0.500 10.500L7 2" stroke="#686874" stroke-width="1.700" stroke-dasharray="1.300 .500"/><path d="M3.500 0.500L9 6.500M8.500 0.500L5.500 4M2 3.500H5M7.500 3.500H9.500M6 7V9" stroke="#8a8a96" stroke-width=".9"/><path d="M9 3.5H14V5.5" fill="none" stroke="#a4a4b2" stroke-width="1.300"/><path d="M11 4.5H17L14 7.5Z" fill="#a4a4b2"/><rect x="3" y="9" width="13" height="7" fill="#686874"/><rect x="4" y="10" width="2" height="1" fill="#fff"/><rect x="7" y="10" width="2" height="1" fill="#fff"/><rect x="10" y="10" width="2" height="1" fill="#fff"/><rect x="13" y="10" width="2" height="1" fill="#fff"/><rect x="4" y="12" width="2" height="1" fill="#fff"/><rect x="7" y="12" width="2" height="1" fill="#fff"/><rect x="10" y="12" width="2" height="1" fill="#fff"/><rect x="13" y="12" width="2" height="1" fill="#fff"/><rect x="4" y="14" width="2" height="1" fill="#fff"/><rect x="7" y="14" width="2" height="1" fill="#fff"/><rect x="10" y="14" width="2" height="1" fill="#fff"/><rect x="13" y="14" width="2" height="1" fill="#fff"/></svg><svg class="ic" style="left:34px;top:5px" width="16" height="16" viewBox="0 0 16 16"><text x="0" y="6" font-family="Liberation Sans,sans-serif" font-size="7.2" font-weight="bold" text-anchor="start" fill="#55555f" textLength="10.500" lengthAdjust="spacingAndGlyphs">123</text><path d="M10.5 2.5H14V5" fill="none" stroke="#a4a4b2" stroke-width="1.300"/><path d="M11 4H17L14 7Z" fill="#a4a4b2"/><rect x="3" y="9" width="13" height="7" fill="#686874"/><rect x="4" y="10" width="2" height="1" fill="#fff"/><rect x="7" y="10" width="2" height="1" fill="#fff"/><rect x="10" y="10" width="2" height="1" fill="#fff"/><rect x="13" y="10" width="2" height="1" fill="#fff"/><rect x="4" y="12" width="2" height="1" fill="#fff"/><rect x="7" y="12" width="2" height="1" fill="#fff"/><rect x="10" y="12" width="2" height="1" fill="#fff"/><rect x="13" y="12" width="2" height="1" fill="#fff"/><rect x="4" y="14" width="2" height="1" fill="#fff"/><rect x="7" y="14" width="2" height="1" fill="#fff"/><rect x="10" y="14" width="2" height="1" fill="#fff"/><rect x="13" y="14" width="2" height="1" fill="#fff"/></svg><svg class="ic" style="left:56px;top:5px" width="16" height="16" viewBox="0 0 16 16"><text x="0" y="6" font-family="Liberation Sans,sans-serif" font-size="7.2" font-weight="bold" text-anchor="start" fill="#55555f" textLength="10.500" lengthAdjust="spacingAndGlyphs">123</text><path d="M10.5 2.5H14V5" fill="none" stroke="#a4a4b2" stroke-width="1.300"/><path d="M11 4H17L14 7Z" fill="#a4a4b2"/><rect x="1" y="7" width="10" height="7" fill="#686874"/><rect x="2" y="8" width="2" height="1" fill="#fff"/><rect x="5" y="8" width="2" height="1" fill="#fff"/><rect x="8" y="8" width="2" height="1" fill="#fff"/><rect x="2" y="10" width="2" height="1" fill="#fff"/><rect x="5" y="10" width="2" height="1" fill="#fff"/><rect x="8" y="10" width="2" height="1" fill="#fff"/><rect x="2" y="12" width="2" height="1" fill="#fff"/><rect x="5" y="12" width="2" height="1" fill="#fff"/><rect x="8" y="12" width="2" height="1" fill="#fff"/><rect x="5" y="8" width="11" height="1" fill="#eeeefa"/><rect x="6" y="9" width="10" height="7" fill="#686874"/><rect x="7" y="10" width="2" height="1" fill="#fff"/><rect x="10" y="10" width="2" height="1" fill="#fff"/><rect x="13" y="10" width="2" height="1" fill="#fff"/><rect x="7" y="12" width="2" height="1" fill="#fff"/><rect x="10" y="12" width="2" height="1" fill="#fff"/><rect x="13" y="12" width="2" height="1" fill="#fff"/><rect x="7" y="14" width="2" height="1" fill="#fff"/><rect x="10" y="14" width="2" height="1" fill="#fff"/><rect x="13" y="14" width="2" height="1" fill="#fff"/></svg><svg class="ic" style="left:78px;top:5px" width="16" height="16" viewBox="0 0 16 16"><path d="M0.500 0.500H4L10 8.500H6.500Z" fill="#686874"/><path d="M9.500 0.500H6L0.500 8H4Z" fill="#7c7c88"/><path d="M1.500 1L8.500 8" stroke="#9a9aa6" stroke-width=".7"/><path d="M10 4.5H14.5V6.5" fill="none" stroke="#a4a4b2" stroke-width="1.300"/><path d="M11.5 5.5H17.5L14.5 8.5Z" fill="#a4a4b2"/><rect x="3" y="9" width="13" height="7" fill="#686874"/><rect x="4" y="10" width="2" height="1" fill="#fff"/><rect x="7" y="10" width="2" height="1" fill="#fff"/><rect x="10" y="10" width="2" height="1" fill="#fff"/><rect x="13" y="10" width="2" height="1" fill="#fff"/><rect x="4" y="12" width="2" height="1" fill="#fff"/><rect x="7" y="12" width="2" height="1" fill="#fff"/><rect x="10" y="12" width="2" height="1" fill="#fff"/><rect x="13" y="12" width="2" height="1" fill="#fff"/><rect x="4" y="14" width="2" height="1" fill="#fff"/><rect x="7" y="14" width="2" height="1" fill="#fff"/><rect x="10" y="14" width="2" height="1" fill="#fff"/><rect x="13" y="14" width="2" height="1" fill="#fff"/></svg><div class="sep" style="left:101px;top:4px;height:18px"></div><svg class="ic" style="left:112px;top:5px" width="16" height="16" viewBox="0 0 16 16"><g transform="translate(-4,0)"><path d="M0.500 5.500L3.500 2.500L5 4L7.500 1.500L11.500 5L9 7.500L7.500 6L6 4.500" fill="none" stroke="#686874" stroke-width="1.800" stroke-linejoin="miter"/><path d="M1.500 5.500L4.500 8.500L6 7L8.500 9" fill="none" stroke="#8e8e9a" stroke-width="1.600"/></g><path d="M9.500 3.500V7" stroke="#a4a4b2" stroke-width="1.300"/><path d="M6.800 6H12.200L9.500 8.800Z" fill="#a4a4b2"/><rect x="-1" y="9" width="13" height="7" fill="#686874"/><rect x="0" y="10" width="3" height="1" fill="#fff"/><rect x="4" y="10" width="3" height="1" fill="#fff"/><rect x="8" y="10" width="3" height="1" fill="#fff"/><rect x="0" y="12" width="3" height="1" fill="#fff"/><rect x="4" y="12" width="3" height="1" fill="#fff"/><rect x="8" y="12" width="3" height="1" fill="#fff"/><rect x="0" y="14" width="3" height="1" fill="#fff"/><rect x="4" y="14" width="3" height="1" fill="#fff"/><rect x="8" y="14" width="3" height="1" fill="#fff"/></svg><svg class="ic" style="left:134px;top:5px" width="16" height="16" viewBox="0 0 16 16"><g transform="translate(-4,0)"><path d="M0.500 5.500L3.500 2.500L5 4L7.500 1.500L11.500 5L9 7.500L7.500 6L6 4.500" fill="none" stroke="#686874" stroke-width="1.800" stroke-linejoin="miter"/><path d="M1.500 5.500L4.500 8.500L6 7L8.500 9" fill="none" stroke="#8e8e9a" stroke-width="1.600"/></g><path d="M9.500 3.500V7" stroke="#a4a4b2" stroke-width="1.300"/><path d="M6.800 6H12.200L9.500 8.800Z" fill="#a4a4b2"/><path d="M1.500 9V16M6.500 8.500V16M11.500 9V16" stroke="#686874" stroke-width="1.300"/><path d="M-1 13.500H4M4.500 10.500H8.500M9 13.500H14" stroke="#686874" stroke-width="1.700"/></svg><svg class="ic" style="left:152px;top:5px" width="16" height="16" viewBox="0 0 16 16"><rect x="0" y="0" width="9" height="7" fill="#686874"/><rect x="1" y="1" width="3" height="1" fill="#fff"/><rect x="5" y="1" width="3" height="1" fill="#fff"/><rect x="1" y="3" width="3" height="1" fill="#fff"/><rect x="5" y="3" width="3" height="1" fill="#fff"/><rect x="1" y="5" width="3" height="1" fill="#fff"/><rect x="5" y="5" width="3" height="1" fill="#fff"/><path d="M9.5 3.5H14V5.5" fill="none" stroke="#a4a4b2" stroke-width="1.300"/><path d="M11 4.5H17L14 7.5Z" fill="#a4a4b2"/><rect x="7" y="9" width="9" height="7" fill="#686874"/><rect x="8" y="10" width="3" height="1" fill="#fff"/><rect x="12" y="10" width="3" height="1" fill="#fff"/><rect x="8" y="12" width="3" height="1" fill="#fff"/><rect x="12" y="12" width="3" height="1" fill="#fff"/><rect x="8" y="14" width="3" height="1" fill="#fff"/><rect x="12" y="14" width="3" height="1" fill="#fff"/></svg><div class="sep" style="left:175px;top:4px;height:18px"></div><svg class="ic" style="left:182px;top:5px" width="16" height="16" viewBox="0 0 16 16"><path d="M0.500 0.500H5.500V8.500H0.500Z" fill="#f4f4fb" stroke="#686874" stroke-width="1.150"/><path d="M3 2.500H8.500V10.500H3Z" fill="#f4f4fb" stroke="#686874" stroke-width="1.150"/><path d="M5.500 4.500H10.500V12.500H5.500Z" fill="#f4f4fb" stroke="#686874" stroke-width="1.150"/><path d="M10.500 3.500C13.500 3.500 14 4.500 14 6" fill="none" stroke="#a4a4b2" stroke-width="1.300"/><path d="M11.300 5.200H16.700L14 8Z" fill="#a4a4b2"/><rect x="6" y="9" width="10" height="7" fill="#686874"/><rect x="7" y="10" width="2" height="1" fill="#fff"/><rect x="10" y="10" width="2" height="1" fill="#fff"/><rect x="13" y="10" width="2" height="1" fill="#fff"/><rect x="7" y="12" width="2" height="1" fill="#fff"/><rect x="10" y="12" width="2" height="1" fill="#fff"/><rect x="13" y="12" width="2" height="1" fill="#fff"/><rect x="7" y="14" width="2" height="1" fill="#fff"/><rect x="10" y="14" width="2" height="1" fill="#fff"/><rect x="13" y="14" width="2" height="1" fill="#fff"/></svg><div class="tb" style="left:215px;width:77px"></div><div class="cap" style="left:292px;width:13px"></div><svg class="ic" style="left:295px;top:16px" width="6" height="6" viewBox="0 0 6 6"><path d="M0.300 0H5.700V1.300H0.300Z M0 2.600H6L3 6Z" fill="#000"/></svg><svg class="ic" style="left:218px;top:5px" width="3" height="16" viewBox="0 0 3 16"><rect x="1" y="1" width="2" height="2" fill="#fff"/><rect x="0" y="0" width="2" height="2" fill="#8c8c86"/><rect x="1" y="5" width="2" height="2" fill="#fff"/><rect x="0" y="4" width="2" height="2" fill="#8c8c86"/><rect x="1" y="9" width="2" height="2" fill="#fff"/><rect x="0" y="8" width="2" height="2" fill="#8c8c86"/><rect x="1" y="13" width="2" height="2" fill="#fff"/><rect x="0" y="12" width="2" height="2" fill="#8c8c86"/></svg><svg class="ic" style="left:228px;top:5px" width="16" height="16" viewBox="0 0 16 16"><path d="M5.500 0.500L9.300 9M10.500 0.500L6.700 9" stroke="#70707a" stroke-width="1.900"/><path d="M6.200 2L8.500 7.500M9.800 2L7.500 7.500" stroke="#c8c8d0" stroke-width=".7"/><ellipse cx="5.300" cy="12" rx="1.900" ry="2.500" fill="none" stroke="#2a55d0" stroke-width="1.700" transform="rotate(25 5.300 12)"/><ellipse cx="10.700" cy="12" rx="1.900" ry="2.500" fill="none" stroke="#2a55d0" stroke-width="1.700" transform="rotate(-25 10.700 12)"/></svg><svg class="ic" style="left:249px;top:5px" width="16" height="16" viewBox="0 0 16 16"><path d="M1 0.800H6.500L9 3.300V10H1Z" fill="#fff" stroke="#2a55c0" stroke-width="1.200"/><path d="M2.500 3.500H6M2.500 5.500H7.500M2.500 7.500H7.500" stroke="#5a88e0" stroke-width="1"/><path d="M6.500 5H12L15 8V15.200H6.500Z" fill="#fff" stroke="#1a45b0" stroke-width="1.300"/><path d="M12 5V8H15" fill="#cfe0fa" stroke="#1a45b0" stroke-width="1"/><path d="M8 9H11.500M8 11H13.500M8 13H13.500" stroke="#3a70e0" stroke-width="1.100"/></svg><svg class="ic" style="left:271px;top:5px" width="16" height="16" viewBox="0 0 16 16"><rect x="1" y="2.500" width="11.500" height="12" rx="1" fill="#e6b422" stroke="#8a6a10" stroke-width="1.100"/><rect x="2" y="3.500" width="9.500" height="10" fill="#f2c838"/><path d="M4.500 3.500V1.800H6C6 0 8 0 8 1.800H9.500V3.500Z" fill="#b8b8c0" stroke="#606068" stroke-width=".9"/><path d="M7 7.500H13L16 10.500V15.500H7Z" fill="#f4f4fa" stroke="#50506a" stroke-width="1.200"/><path d="M8.500 10H12M8.500 12H14.500M8.500 13.800H14.500" stroke="#7a7a9a" stroke-width="1"/></svg><div class="tb" style="left:306px;width:495px"></div><div class="cap" style="left:801px;width:13px"></div><svg class="ic" style="left:804px;top:16px" width="6" height="6" viewBox="0 0 6 6"><path d="M0.300 0H5.700V1.300H0.300Z M0 2.600H6L3 6Z" fill="#000"/></svg><svg class="ic" style="left:307px;top:5px" width="3" height="16" viewBox="0 0 3 16"><rect x="1" y="1" width="2" height="2" fill="#fff"/><rect x="0" y="0" width="2" height="2" fill="#8c8c86"/><rect x="1" y="5" width="2" height="2" fill="#fff"/><rect x="0" y="4" width="2" height="2" fill="#8c8c86"/><rect x="1" y="9" width="2" height="2" fill="#fff"/><rect x="0" y="8" width="2" height="2" fill="#8c8c86"/><rect x="1" y="13" width="2" height="2" fill="#fff"/><rect x="0" y="12" width="2" height="2" fill="#8c8c86"/></svg><div class="combo" style="left:316px;top:5px;width:124px;height:18px"><svg class="ic" style="left:7px;top:3px" width="13" height="13" viewBox="0 0 13 13"><text x="-1" y="10" font-family="Liberation Serif,serif" font-size="13.500" fill="#808080">T</text><text x="4" y="13" font-family="Liberation Serif,serif" font-weight="bold" font-size="11.500" fill="#000">T</text></svg><span class="t" style="left:24px;top:3px;font-size:12px;letter-spacing:-0.15px">Default: Arial</span><div class="btn"></div></div><div class="combo" style="left:446px;top:5px;width:56px;height:18px"><div class="btn"></div></div><span class="t" style="left:511px;top:5px;font-family:'Liberation Serif',serif;font-weight:bold;font-size:15.5px">B</span><span class="t" style="left:534px;top:5px;font-family:'Liberation Serif',serif;font-weight:bold;font-style:italic;font-size:15.5px">I</span><span class="t" style="left:555px;top:5px;font-family:'Liberation Serif',serif;font-size:15.5px;text-decoration:underline;text-underline-offset:1px">U</span><span class="t" style="left:577px;top:7px;font-family:'Liberation Serif',serif;font-weight:bold;font-size:13px;color:#7d7d8a">x<span style="font-size:8px;font-weight:normal;position:relative;top:-6px;left:0px">2</span></span><span class="t" style="left:599px;top:7px;font-family:'Liberation Serif',serif;font-weight:bold;font-size:13px;color:#7d7d8a">x<span style="font-size:8px;font-weight:normal;position:relative;top:3px;color:#aaa">2</span></span><span class="t" style="left:621px;top:7px;font-family:'Liberation Serif',serif;font-weight:bold;font-size:13px;color:#7d7d8a">x<span style="font-size:8px;font-weight:normal;position:relative;top:-6px;color:#999">2</span><span style="font-size:8px;font-weight:normal;position:relative;top:3px;left:-4px;color:#aaa">1</span></span><span class="t" style="left:640px;top:3px;font-family:'Liberation Serif',serif;font-weight:bold;font-size:16px;color:#7d7d8a;letter-spacing:-0.3px">αβ</span><svg class="ic" style="left:662px;top:5px" width="16" height="16" viewBox="0 0 16 16"><text x="6.500" y="14.500" text-anchor="middle" font-family="Liberation Serif,serif" font-weight="bold" font-size="19" fill="#80808c">A</text><path d="M11.500 4.500H16.500L14 1.500Z" fill="#80808c"/></svg><svg class="ic" style="left:686px;top:5px" width="16" height="16" viewBox="0 0 16 16"><text x="6" y="13.500" text-anchor="middle" font-family="Liberation Serif,serif" font-weight="bold" font-size="13" fill="#80808c">A</text><path d="M8.500 1.500H13.500L11 4.500Z" fill="#80808c"/></svg><svg class="ic" style="left:707px;top:5px" width="13" height="14" viewBox="0 0 13 14"><path d="M0 1.500H12M0 4.300H8M0 7.100H12M0 9.900H8M0 12.700H12" stroke="#000" stroke-width="1.300"/></svg><div class="dd" style="left:725px;top:12px"></div><svg class="ic" style="left:737px;top:5px" width="14" height="14" viewBox="0 0 14 14"><path d="M0.500 1V12M3.500 1V12M6.500 1V12M9.500 1V9M12.500 1V12" stroke="#000" stroke-width="1.100"/></svg><div class="dd" style="left:756px;top:12px"></div><svg class="ic" style="left:770px;top:4px" width="16" height="16" viewBox="0 0 16 16"><text x="8" y="12" text-anchor="middle" font-family="Liberation Serif,serif" font-weight="bold" font-size="17.500" fill="#0a0a8c">A</text><rect x="0" y="13" width="16" height="3.500" fill="#000"/></svg><div class="dd" style="left:792px;top:12px"></div><div class="tb" style="left:815px;width:421px;border-radius:0"></div><svg class="ic" style="left:817px;top:5px" width="3" height="16" viewBox="0 0 3 16"><rect x="1" y="1" width="2" height="2" fill="#fff"/><rect x="0" y="0" width="2" height="2" fill="#8c8c86"/><rect x="1" y="5" width="2" height="2" fill="#fff"/><rect x="0" y="4" width="2" height="2" fill="#8c8c86"/><rect x="1" y="9" width="2" height="2" fill="#fff"/><rect x="0" y="8" width="2" height="2" fill="#8c8c86"/><rect x="1" y="13" width="2" height="2" fill="#fff"/><rect x="0" y="12" width="2" height="2" fill="#8c8c86"/></svg><svg class="ic" style="left:828px;top:4px" width="16" height="16" viewBox="0 0 16 16"><path d="M2 7L8 1.500L13 6.500L7 12Z" fill="#fff" stroke="#000" stroke-width="1.200"/><path d="M6.500 0.500C8 -0.500 9.500 0.500 9 4" fill="none" stroke="#0a18a0" stroke-width="1.300"/><path d="M11 4.500C13.500 5 14 7.500 13 10.500C12 8.500 12 7 11.500 6Z" fill="#0a2098" stroke="#0a2098" stroke-width=".8"/><rect x="0" y="13" width="16" height="3.500" fill="#fff"/></svg><div class="dd" style="left:850px;top:12px"></div><svg class="ic" style="left:863px;top:4px" width="16" height="16" viewBox="0 0 16 16"><path d="M8 1C3 1 0.500 4 0.500 6.500C0.500 9.500 3.500 11 6 10.500C7.500 10.200 7.500 11.800 9 11.800C12.500 11.800 15.500 9 15.500 5.500C15.500 2.500 12 1 8 1Z" fill="#c0c0c8" stroke="#a0a0a8" stroke-width="1" stroke-dasharray="1.500 .7"/><path d="M4 5.500L7 8M9 4L11 7.500M12 4L8 8" stroke="#e4e4ea" stroke-width="1.200"/><rect x="0" y="13" width="16" height="3.500" fill="#858585"/></svg><div class="dd g" style="left:885px;top:12px"></div><svg class="ic" style="left:898px;top:4px" width="16" height="16" viewBox="0 0 16 16"><path d="M3 11L4 8L11.500 0.800L13.800 3L6 10.200Z" fill="#fff" stroke="#000" stroke-width="1.100"/><path d="M10 2.300L12.300 4.500" stroke="#000" stroke-width="1"/><path d="M1 11.500H4" stroke="#000" stroke-width="1"/><rect x="0" y="13" width="16" height="3.500" fill="#000"/></svg><div class="dd" style="left:920px;top:12px"></div><svg class="ic" style="left:931px;top:4px" width="16" height="16" viewBox="0 0 16 16"><path d="M5.500 10.500C3 9 3.500 4.500 8 4.500S13 9 10.500 10.500V12.500H5.500Z" fill="#9c9ca8" stroke="#80808c" stroke-width="1"/><path d="M6.500 4.500V2H9.500V4.500" fill="#c4c4cc" stroke="#80808c" stroke-width="1"/><path d="M0.500 8.500H2.500M13.500 8.500H15.500M2 3.500L3.500 5M14 3.500L12.500 5M2 13.500L3.700 12M14 13.500L12.300 12M8 14V16" stroke="#80808c" stroke-width="1.100"/></svg><div class="combo" style="left:953px;top:5px;width:56px;height:18px"><div class="abs" style="left:5px;top:9px;width:32px;height:1px;background:#000"></div><div class="btn"></div></div><div class="combo" style="left:1015px;top:5px;width:56px;height:18px"><div class="btn"></div></div><div class="abs" style="left:1078px;top:5px;width:36px;height:17px;border:1px solid #a9a9b4;border-top-color:#8c8c98;background:linear-gradient(#e9e9f3,#d4d4e4)"></div><div class="dd g" style="left:1119px;top:11px"></div><div class="abs" style="left:1129px;top:5px;width:58px;height:18px;border:1px solid #b4b4b4;background:#f0f0f0"></div><div class="dd g" style="left:1176px;top:11px"></div><svg class="ic" style="left:1194px;top:4px" width="16" height="16" viewBox="0 0 16 16"><path d="M0 5L5 0M0 9L9 0M0 13L13 0M3.500 13L16 1M8 13L16 5.500M12 13L16 9.500" stroke="#606068" stroke-width="1.300"/><rect x="0" y="13" width="16" height="3.500" fill="#858585"/></svg><div class="dd g" style="left:1216px;top:11px"></div><svg class="ic" style="left:1227px;top:4px" width="16" height="16" viewBox="0 0 16 16"><path d="M1 1.500H16M1 6H16M1 10.500H16M1.500 1V12M6 1V12M10.500 1V12" stroke="#8a8a92" stroke-width="1" stroke-dasharray="1 1"/><path d="M0 14.500H16" stroke="#000" stroke-width="1.500"/></svg></div>
<div id="dock" class="abs"><div class="vtab" style="top:4px;height:147px"><span id="vt1" style="top:4px">Project Explorer (1)</span></div><div class="vtab" style="top:162px;height:103px"><span id="vt2" style="top:7px">Messages Log</span></div><div class="vtab" style="top:276px;height:105px"><span id="vt3" style="top:7px">Smart Hint Log</span></div><div class="vtb" style="left:21px;top:1px;width:34px;height:427px;border-radius:0 3px 6px 0;border-left:1px solid #b4b4c8"></div><div class="abs" style="left:20px;top:428px;width:35px;height:13px;border-radius:0 0 6px 0;background:linear-gradient(90deg,#ebebf7 0%,#dedeec 50%,#c4c4d8 100%)"></div><svg class="ic" style="left:44px;top:431px" width="7" height="7" viewBox="0 0 7 7"><path d="M0.5 0.5V6.5H1.8V0.5Z M3 0L7 3.5L3 7Z" fill="#000"/></svg><svg class="ic" style="left:25px;top:4px" width="24" height="3" viewBox="0 0 24 3"><rect x="1" y="1" width="2" height="2" fill="#fff"/><rect x="0" y="0" width="2" height="2" fill="#8c8c86"/><rect x="5" y="1" width="2" height="2" fill="#fff"/><rect x="4" y="0" width="2" height="2" fill="#8c8c86"/><rect x="9" y="1" width="2" height="2" fill="#fff"/><rect x="8" y="0" width="2" height="2" fill="#8c8c86"/><rect x="13" y="1" width="2" height="2" fill="#fff"/><rect x="12" y="0" width="2" height="2" fill="#8c8c86"/><rect x="17" y="1" width="2" height="2" fill="#fff"/><rect x="16" y="0" width="2" height="2" fill="#8c8c86"/><rect x="21" y="1" width="2" height="2" fill="#fff"/><rect x="20" y="0" width="2" height="2" fill="#8c8c86"/></svg><div class="hl" style="left:22px;top:10px;width:22px;height:22px"></div><svg class="ic" style="left:25px;top:13px" width="16" height="16" viewBox="0 0 16 16"><path d="M3.500 1V13L6.500 10L9 15L10.800 14L8.500 9.500H12.500Z" fill="#eeeef8" stroke="#686874" stroke-width="1.200" stroke-linejoin="round"/></svg><svg class="ic" style="left:25px;top:35px" width="16" height="16" viewBox="0 0 16 16"><circle cx="6" cy="5.500" r="4.300" fill="#f0f0f8" stroke="#686874" stroke-width="1.200"/><path d="M3.500 5.500H8.500M6 3V8" stroke="#686874" stroke-width="1.100"/><path d="M9.200 8.700L14.500 13.500" stroke="#686874" stroke-width="2.200"/><path d="M1.500 12.500V15.500H9.500V12.500M5.500 14V15.500" fill="none" stroke="#686874" stroke-width="1.100"/></svg><svg class="ic" style="left:25px;top:57px" width="16" height="16" viewBox="0 0 16 16"><circle cx="6" cy="5.500" r="4.300" fill="#f0f0f8" stroke="#686874" stroke-width="1.200"/><path d="M3.500 5.500H8.500" stroke="#686874" stroke-width="1.100"/><path d="M9.200 8.700L14.500 13.500" stroke="#686874" stroke-width="2.200"/><path d="M1.500 12.500V15.500H9.500V12.500M4.200 14V15.500M6.800 14V15.500" fill="none" stroke="#686874" stroke-width="1.100"/></svg><svg class="ic" style="left:25px;top:79px" width="16" height="16" viewBox="0 0 16 16"><path d="M7.500 1.500V14.500M1.500 8H13.500" stroke="#686874" stroke-width="1.200"/><rect x="5.500" y="6" width="4" height="4" fill="#e4e4ee" stroke="#686874" stroke-width="1"/></svg><svg class="ic" style="left:25px;top:101px" width="16" height="16" viewBox="0 0 16 16"><circle cx="6.500" cy="8" r="4.800" fill="#f0f0f8" stroke="#686874" stroke-width="1.200"/><path d="M6.500 0.500V5M6.500 11V15.500M-1 8H3.500M9.500 8H14" stroke="#686874" stroke-width="1.200"/><circle cx="6.500" cy="8" r="1" fill="#686874"/></svg><div class="dd" style="left:44px;top:107px"></div><svg class="ic" style="left:25px;top:123px" width="16" height="16" viewBox="0 0 16 16"><path d="M7.500 0.500V5M7.500 15.500V11" stroke="#686874" stroke-width="1.400"/><path d="M4 3.500H11L7.500 7Z M4 12.500H11L7.500 9Z" fill="#686874"/></svg><svg class="ic" style="left:25px;top:145px" width="16" height="16" viewBox="0 0 16 16"><path d="M2.500 0V4" stroke="#686874" stroke-width="1.400"/><path d="M-0.500 3H5.500L2.500 6.500Z" fill="#686874"/><ellipse cx="7.500" cy="11" rx="7" ry="3.600" fill="#a4a4b0" stroke="#686874" stroke-width="1.100" transform="rotate(-6 7.500 11)"/></svg><div class="dd" style="left:44px;top:151px"></div><svg class="ic" style="left:25px;top:167px" width="16" height="16" viewBox="0 0 16 16"><path d="M2.500 0V4" stroke="#686874" stroke-width="1.400"/><path d="M-0.500 3H5.500L2.500 6.500Z" fill="#686874"/><path d="M0 14.500L14 6" stroke="#686874" stroke-width="1.100"/><path d="M6.500 8.500H12.500V14.500H6.500" fill="none" stroke="#686874" stroke-width="1.100" stroke-dasharray="2 1"/><path d="M8 11H11M8 13H11" stroke="#a4a4b2" stroke-width="1"/></svg><div class="dd" style="left:44px;top:173px"></div><svg class="ic" style="left:25px;top:189px" width="16" height="16" viewBox="0 0 16 16"><rect x="5.500" y="2" width="2" height="2" fill="#686874"/><rect x="3" y="6.500" width="2" height="2" fill="#686874"/><rect x="11" y="5" width="2" height="2" fill="#686874"/><rect x="11" y="8.500" width="2" height="2" fill="#686874"/><rect x="7" y="11" width="2" height="2" fill="#686874"/></svg><svg class="ic" style="left:25px;top:211px" width="16" height="16" viewBox="0 0 16 16"><text x="8" y="14" font-family="Liberation Serif,serif" font-size="17.5" font-weight="bold" text-anchor="middle" fill="#686874" >T</text></svg><svg class="ic" style="left:25px;top:233px" width="16" height="16" viewBox="0 0 16 16"><rect x="1.500" y="4.500" width="10" height="10" fill="#f0f0f8" stroke="#686874" stroke-width="1.300"/><path d="M6.500 4.500V14.500M1.500 9.500H11.500" stroke="#686874" stroke-width="1.100"/><rect x="5" y="8" width="3" height="3" fill="#fff"/><path d="M13 4V2.500C13 1 15 1 15 2.500V4M12.500 4H15.500V6H12.500Z" fill="none" stroke="#a4a4b2" stroke-width=".9"/></svg><svg class="ic" style="left:25px;top:255px" width="16" height="16" viewBox="0 0 16 16"><path d="M1.500 13.500L10 5" stroke="#686874" stroke-width="1.700"/><path d="M6 2.500H12.500V9Z" fill="#686874"/></svg><div class="dd" style="left:44px;top:261px"></div><svg class="ic" style="left:25px;top:277px" width="16" height="16" viewBox="0 0 16 16"><path d="M0.500 13.500L12.500 2" stroke="#686874" stroke-width="1.500"/></svg><div class="dd" style="left:44px;top:283px"></div><svg class="ic" style="left:25px;top:299px" width="16" height="16" viewBox="0 0 16 16"><rect x="1.500" y="3.500" width="11.500" height="9" fill="#b4b4c0" stroke="#686874" stroke-width="1.300"/></svg><div class="dd" style="left:44px;top:305px"></div><svg class="ic" style="left:25px;top:321px" width="16" height="16" viewBox="0 0 16 16"><path d="M4.500 8V3.500C4.500 2 6.300 2 6.300 3.500V2C6.300 0.500 8.200 0.500 8.200 2V2.500C8.200 1 10 1 10 2.500V4C10 2.800 11.800 2.800 11.800 4V10C11.800 13 10.500 15 8 15H7C5 15 4 13.500 2.500 11L1 8.500C0.500 7.500 2 6.500 3 7.800Z" fill="#f0f0f8" stroke="#686874" stroke-width="1.100" stroke-linejoin="round"/><path d="M6.300 3.500V8M8.200 2.500V8M10 4V8" stroke="#686874" stroke-width=".9"/></svg><svg class="ic" style="left:25px;top:343px" width="16" height="16" viewBox="0 0 16 16"><path d="M1 0.500H10L14 4.500V15.500H1Z" fill="#e8e8f2" stroke="#686874" stroke-width="1.200"/><path d="M10 0.500V4.500H14" fill="none" stroke="#686874" stroke-width="1"/><path d="M2.500 10.500L4 13.500L5.500 6.500H12.500" fill="none" stroke="#686874" stroke-width="1.100"/><ellipse cx="9" cy="11" rx="1.800" ry="2.200" fill="none" stroke="#686874" stroke-width="1"/><path d="M11 8.500V13.500" stroke="#686874" stroke-width="1"/></svg><div class="dd" style="left:44px;top:349px"></div><svg class="ic" style="left:25px;top:365px" width="16" height="16" viewBox="0 0 16 16"><path d="M1 0.500H10L14 4.500V15.500H1Z" fill="#e8e8f2" stroke="#686874" stroke-width="1.200"/><path d="M10 0.500V4.500H14" fill="none" stroke="#686874" stroke-width="1"/><path d="M3.500 5V13H12" fill="none" stroke="#686874" stroke-width="1.200" stroke-dasharray="1.200 .800"/><path d="M5 11.500C7 11.500 7.500 8 9 8S10.500 9.500 12.500 6.500" fill="none" stroke="#686874" stroke-width="1"/></svg><div class="dd" style="left:44px;top:371px"></div><svg class="ic" style="left:25px;top:387px" width="16" height="16" viewBox="0 0 16 16"><g transform="translate(0,-1) scale(.82)"><path d="M4.500 8V3.500C4.500 2 6.300 2 6.300 3.500V2C6.300 0.500 8.200 0.500 8.200 2V2.500C8.200 1 10 1 10 2.500V4C10 2.800 11.800 2.800 11.800 4V10C11.800 13 10.500 15 8 15H7C5 15 4 13.500 2.500 11L1 8.500C0.500 7.500 2 6.500 3 7.800Z" fill="#f0f0f8" stroke="#686874" stroke-width="1.100" stroke-linejoin="round"/><path d="M6.300 3.500V8M8.200 2.500V8M10 4V8" stroke="#686874" stroke-width=".9"/></g><path d="M13.500 1V15.500M0.500 13.500H15.500" stroke="#686874" stroke-width="1.200"/><path d="M12 4H15M12 7H15M12 10H15M3 12V15M7 12V15M10.500 12V15" stroke="#686874" stroke-width=".9"/></svg><svg class="ic" style="left:25px;top:409px" width="16" height="16" viewBox="0 0 16 16"><path d="M4 4.500L7.500 1H15V11L11.500 15H4Z" fill="#9c9ca8" stroke="#686874" stroke-width="1.100" stroke-linejoin="round"/><path d="M4 4.500H11.500V15M11.500 4.500L15 1" fill="none" stroke="#686874" stroke-width="1.100"/><rect x="4.600" y="5.100" width="6.300" height="9.300" fill="#b4b4c0"/><path d="M4 8.500L1.500 10L4 11.500" fill="none" stroke="#a4a4b2" stroke-width="1.200"/></svg><div class="vtb" style="left:21px;top:442px;width:25px;height:186px;border-radius:0 3px 6px 0;border-left:1px solid #b4b4c8"></div><div class="abs" style="left:20px;top:628px;width:26px;height:12px;border-radius:0 0 6px 0;background:linear-gradient(90deg,#ebebf7 0%,#dedeec 50%,#c4c4d8 100%)"></div><svg class="ic" style="left:36px;top:630px" width="7" height="7" viewBox="0 0 7 7"><path d="M0.5 0.5V6.5H1.8V0.5Z M3 0L7 3.5L3 7Z" fill="#000"/></svg><svg class="ic" style="left:25px;top:446px" width="16" height="3" viewBox="0 0 16 3"><rect x="1" y="1" width="2" height="2" fill="#fff"/><rect x="0" y="0" width="2" height="2" fill="#8c8c86"/><rect x="5" y="1" width="2" height="2" fill="#fff"/><rect x="4" y="0" width="2" height="2" fill="#8c8c86"/><rect x="9" y="1" width="2" height="2" fill="#fff"/><rect x="8" y="0" width="2" height="2" fill="#8c8c86"/><rect x="13" y="1" width="2" height="2" fill="#fff"/><rect x="12" y="0" width="2" height="2" fill="#8c8c86"/></svg><svg class="ic" style="left:25px;top:454px" width="16" height="16" viewBox="0 0 16 16"><path d="M0 1.500H16M0 4.700H16M0 7.900H16" stroke="#a8a8b4" stroke-width="2"/><path d="M0 11.100H16M0 14.300H16" stroke="#8c8c98" stroke-width="2.200"/></svg><svg class="ic" style="left:25px;top:476px" width="16" height="16" viewBox="0 0 16 16"><circle cx="8" cy="8" r="7" fill="#f0f0f8" stroke="#686874" stroke-width="1.200"/><path d="M4.500 13.500C2 9 4.500 4 8 4S14 9 11.500 13.500" fill="none" stroke="#686874" stroke-width="1.100"/><path d="M6.500 15V11.500C6.500 9.500 9.500 9.500 9.500 11.500V15" fill="none" stroke="#686874" stroke-width="1.100"/></svg><svg class="ic" style="left:25px;top:498px" width="16" height="16" viewBox="0 0 16 16"><path d="M0.800 16V0.800H15.200V16" fill="none" stroke="#686874" stroke-width="1.200"/><path d="M3 5H8M3 11H8" stroke="#686874" stroke-width="1.100"/><circle cx="5.500" cy="11" r="1.100" fill="#686874"/><text x="9.300" y="7.500" font-family="Liberation Sans,sans-serif" font-weight="bold" font-size="6.500" fill="#686874">B</text><text x="9.300" y="13.800" font-family="Liberation Sans,sans-serif" font-weight="bold" font-size="6.500" fill="#686874">C</text></svg><svg class="ic" style="left:25px;top:520px" width="16" height="16" viewBox="0 0 16 16"><path d="M8 0V6M5.300 1.300L10.700 4.700M10.700 1.300L5.300 4.700" stroke="#686874" stroke-width="1.100"/><path d="M0.800 15.500V9H15.200V15.500" fill="none" stroke="#686874" stroke-width="1.300"/></svg><svg class="ic" style="left:25px;top:542px" width="16" height="16" viewBox="0 0 16 16"><rect x="4" y="0.800" width="8" height="14.400" fill="#f0f0f8" stroke="#686874" stroke-width="1.100"/><path d="M9 3H12M9 6H12M9 9H12M9 12H12" stroke="#686874" stroke-width="1"/><path d="M6 2.500V5M4.800 3.700H7.200M6 7V9.500M4.800 8.200H7.200M4.800 12.500H7.200" stroke="#686874" stroke-width=".9"/></svg><svg class="ic" style="left:25px;top:564px" width="16" height="16" viewBox="0 0 16 16"><circle cx="6.500" cy="6.500" r="5.800" fill="#f0f0f8" stroke="#686874" stroke-width="1.200"/><path d="M6.500 2.500V6.500H9.500" fill="none" stroke="#686874" stroke-width="1.100"/><path d="M10 8H13V11L14.5 13H8.5L10 11Z" fill="#8c8c98" stroke="#686874" stroke-width=".8"/><rect x="7.5" y="13.8" width="8" height="1.800" fill="#686874"/></svg><svg class="ic" style="left:25px;top:586px" width="16" height="16" viewBox="0 0 16 16"><path d="M1 13.500V1.500H5.500L6.500 3H13.500V13.500Z" fill="#9c9ca8" stroke="#686874" stroke-width="1.100"/><path d="M10 8H13V11L14.5 13H8.5L10 11Z" fill="#8c8c98" stroke="#686874" stroke-width=".8"/><rect x="7.5" y="13.8" width="8" height="1.800" fill="#686874"/></svg><svg class="ic" style="left:25px;top:608px" width="16" height="16" viewBox="0 0 16 16"><rect x="0.8" y="2" width="14.4" height="11.5" fill="#f4f4fb" stroke="#686874" stroke-width="1.3"/><path d="M5.60 2V13.5M10.40 2V13.5M0.8 5.83H15.200000000000001M0.8 9.67H15.200000000000001" stroke="#686874" stroke-width="1.3" fill="none"/></svg></div><div class="abs" style="left:56px;top:99px;width:2px;height:718px;background:linear-gradient(90deg,#8c8c8c,#6e6e6e)"></div><div class="abs" style="left:0;top:98px;width:1236px;height:1px;background:#9a9aaa"></div><div class="abs" style="left:56px;top:99px;width:1180px;height:2px;background:linear-gradient(#747474,#7e7e7e)"></div>
<div class="win" style="left:204px;top:201px;width:396px;height:321px;background:linear-gradient(#b7c7d9 0,#c6d4e3 10px,#dbe5f0 28px,#d9e3ee 34px,#d6e0ec 100%);border:1px solid #5c6066;box-shadow:inset 1px 1px 0 0 #eef3f9"><svg class="ic" style="left:9px;top:9px" width="16" height="16" viewBox="0 0 16 16"><rect x="1" y="1" width="14.500" height="14.500" fill="#000"/><rect x="0" y="0" width="14" height="14" fill="#fff"/><path d="M4.900 0.500V14M9.300 0.500V14M0.500 4H14M0.500 7.400H14M0.500 10.800H14" stroke="#2828c8" stroke-width=".9"/><rect x="1.0" y="1.0" width="3.6" height="2.6" fill="#f01818"/><rect x="2.2" y="1.5" width="1.200" height="1.600" fill="#fff"/><rect x="5.4" y="1.0" width="3.6" height="2.6" fill="#f01818"/><rect x="6.6" y="1.5" width="1.200" height="1.600" fill="#fff"/><rect x="9.8" y="1.0" width="3.6" height="2.6" fill="#f01818"/><rect x="11.0" y="1.5" width="1.200" height="1.600" fill="#fff"/><rect x="1.0" y="4.4" width="3.6" height="2.6" fill="#18d818"/><rect x="1.9" y="5.2" width="1.800" height="1" fill="#b8f8b8"/><rect x="5.4" y="4.4" width="3.6" height="2.6" fill="#18d818"/><rect x="6.3" y="5.2" width="1.800" height="1" fill="#b8f8b8"/><rect x="9.8" y="4.4" width="3.6" height="2.6" fill="#18d818"/><rect x="10.7" y="5.2" width="1.800" height="1" fill="#b8f8b8"/><rect x="1.0" y="7.8" width="3.6" height="2.6" fill="#18d818"/><rect x="1.9" y="8.6" width="1.800" height="1" fill="#b8f8b8"/><rect x="5.4" y="7.8" width="3.6" height="2.6" fill="#18d818"/><rect x="6.3" y="8.6" width="1.800" height="1" fill="#b8f8b8"/><rect x="9.8" y="7.8" width="3.6" height="2.6" fill="#18d818"/><rect x="10.7" y="8.6" width="1.800" height="1" fill="#b8f8b8"/><rect x="1.0" y="11.2" width="3.6" height="2.6" fill="#18d818"/><rect x="1.9" y="12.0" width="1.800" height="1" fill="#b8f8b8"/><rect x="5.4" y="11.2" width="3.6" height="2.6" fill="#18d818"/><rect x="6.3" y="12.0" width="1.800" height="1" fill="#b8f8b8"/><rect x="9.8" y="11.2" width="3.6" height="2.6" fill="#18d818"/><rect x="10.7" y="12.0" width="1.800" height="1" fill="#b8f8b8"/></svg><span class="wt" id="bk" style="left:29px;top:11px">Book1 *</span><div class="wbtn" style="left:285px;top:8px"><div class="abs" style="left:9px;top:7px;width:11px;height:5px;border:1px solid #454a5c;border-radius:1.500px;background:#fff"></div></div><div class="wbtn" style="left:319px;top:8px"><div class="abs" style="left:9px;top:3px;width:11px;height:9px;border:1px solid #454a5c;border-radius:1.500px;background:#fff"><div class="abs" style="left:2px;top:2px;width:5px;height:3px;border:1px solid #454a5c;background:#b4c0d4"></div></div></div><div class="wbtn" style="left:353px;top:8px"><svg class="ic" style="left:9px;top:3px" width="12" height="10" viewBox="0 0 12 10"><path d="M2.500 2L9.500 8M9.500 2L2.500 8" stroke="#454a5c" stroke-width="3.600" stroke-linecap="square"/><path d="M2.500 2L9.500 8M9.500 2L2.500 8" stroke="#fff" stroke-width="1.900" stroke-linecap="square"/></svg></div><div class="abs" style="left:8px;top:30px;width:379px;height:282px;background:#e1e0e7;border:1px solid #686868;border-right-color:#f6f8fb;border-bottom-color:#f6f8fb;overflow:hidden"><div class="abs" style="left:0;top:22px;width:221px;height:240px;background:#0e0e0e"></div><div class="abs" style="left:0;top:22px;width:86px;height:240px;background:#e2e2e2"></div><div class="abs" style="left:88px;top:24px;width:131px;height:238px;background:#5a5a5a"></div><div class="abs" style="left:0;top:0;width:86px;height:23px;background:#e1e0e6;border:1px dotted #000;outline:1px solid #fff;outline-offset:-2px"></div><div class="abs" style="left:86px;top:0px;width:66px;height:22px;background:#1f1f1b;color:#fff;font-size:12.500px;line-height:22px;text-align:center;padding:0 0px;white-space:nowrap;overflow:hidden"><span style="font-size:11.300px">A(X)</span></div><div class="abs" style="left:153px;top:0px;width:66px;height:22px;background:#1f1f1b;color:#fff;font-size:12.500px;line-height:22px;text-align:center;padding:0 0px;white-space:nowrap;overflow:hidden"><span style="font-size:11.300px">B(Y)</span></div><div class="abs" style="left:152px;top:0;width:1px;height:22px;background:#fff"></div><div class="abs" style="left:86px;top:22px;width:133px;height:1px;background:#b8b8b8"></div><div class="abs" style="left:0px;top:24px;width:85px;height:15px;background:#1f1f1b;color:#fff;font-size:12.500px;line-height:17px;text-align:right;padding:0 4px;white-space:nowrap;overflow:hidden">Long Name</div><div class="abs" style="left:88px;top:24px;width:64px;height:15px;background:#06063c;color:#fff;font-size:12.500px;line-height:17px;text-align:right;padding:0 4px;white-space:nowrap;overflow:hidden"></div><div class="abs" style="left:153px;top:24px;width:65px;height:15px;background:#06063c;color:#fff;font-size:12.500px;line-height:17px;text-align:right;padding:0 4px;white-space:nowrap;overflow:hidden"></div><div class="abs" style="left:0px;top:40px;width:85px;height:15px;background:#1f1f1b;color:#fff;font-size:12.500px;line-height:17px;text-align:right;padding:0 4px;white-space:nowrap;overflow:hidden">Units</div><div class="abs" style="left:88px;top:40px;width:64px;height:15px;background:#06063c;color:#fff;font-size:12.500px;line-height:17px;text-align:right;padding:0 4px;white-space:nowrap;overflow:hidden"></div><div class="abs" style="left:153px;top:40px;width:65px;height:15px;background:#06063c;color:#fff;font-size:12.500px;line-height:17px;text-align:right;padding:0 4px;white-space:nowrap;overflow:hidden"></div><div class="abs" style="left:0px;top:56px;width:85px;height:15px;background:#1f1f1b;color:#fff;font-size:12.500px;line-height:17px;text-align:right;padding:0 4px;white-space:nowrap;overflow:hidden">Comments</div><div class="abs" style="left:88px;top:56px;width:64px;height:15px;background:#06063c;color:#fff;font-size:12.500px;line-height:17px;text-align:right;padding:0 4px;white-space:nowrap;overflow:hidden"></div><div class="abs" style="left:153px;top:56px;width:65px;height:15px;background:#06063c;color:#fff;font-size:12.500px;line-height:17px;text-align:right;padding:0 4px;white-space:nowrap;overflow:hidden"></div><div class="abs" style="left:0px;top:72px;width:85px;height:15px;background:#1f1f1b;color:#fff;font-size:12.500px;line-height:17px;text-align:right;padding:0 4px;white-space:nowrap;overflow:hidden">F(x)=</div><div class="abs" style="left:88px;top:72px;width:64px;height:15px;background:#0b0b58;color:#fff;font-size:12.500px;line-height:17px;text-align:right;padding:0 4px;white-space:nowrap;overflow:hidden"></div><div class="abs" style="left:153px;top:72px;width:65px;height:15px;background:#0b0b58;color:#fff;font-size:12.500px;line-height:17px;text-align:right;padding:0 4px;white-space:nowrap;overflow:hidden"></div><div class="abs" style="left:87px;top:25px;width:131px;height:62px;border:1px solid #e4e0bc"></div><div class="abs" style="left:0px;top:88px;width:85px;height:15px;background:#1f1f1b;color:#fff;font-size:12.500px;line-height:17px;text-align:right;padding:0 4px;white-space:nowrap;overflow:hidden">1</div><div class="abs" style="left:88px;top:88px;width:64px;height:15px;background:#000;color:#fff;font-size:12.500px;line-height:17px;text-align:right;padding:0 4px;white-space:nowrap;overflow:hidden">1</div><div class="abs" style="left:153px;top:88px;width:65px;height:15px;background:#000;color:#fff;font-size:12.500px;line-height:17px;text-align:right;padding:0 3px;white-space:nowrap;overflow:hidden">11</div><div class="abs" style="left:0px;top:104px;width:85px;height:15px;background:#1f1f1b;color:#fff;font-size:12.500px;line-height:17px;text-align:right;padding:0 4px;white-space:nowrap;overflow:hidden">2</div><div class="abs" style="left:88px;top:104px;width:64px;height:15px;background:#000;color:#fff;font-size:12.500px;line-height:17px;text-align:right;padding:0 4px;white-space:nowrap;overflow:hidden">2</div><div class="abs" style="left:153px;top:104px;width:65px;height:15px;background:#000;color:#fff;font-size:12.500px;line-height:17px;text-align:right;padding:0 3px;white-space:nowrap;overflow:hidden">22</div><div class="abs" style="left:0px;top:120px;width:85px;height:15px;background:#1f1f1b;color:#fff;font-size:12.500px;line-height:17px;text-align:right;padding:0 4px;white-space:nowrap;overflow:hidden">3</div><div class="abs" style="left:88px;top:120px;width:64px;height:15px;background:#000;color:#fff;font-size:12.500px;line-height:17px;text-align:right;padding:0 4px;white-space:nowrap;overflow:hidden">3</div><div class="abs" style="left:153px;top:120px;width:65px;height:15px;background:#000;color:#fff;font-size:12.500px;line-height:17px;text-align:right;padding:0 3px;white-space:nowrap;overflow:hidden">33</div><div class="abs" style="left:0px;top:136px;width:85px;height:15px;background:#1f1f1b;color:#fff;font-size:12.500px;line-height:17px;text-align:right;padding:0 4px;white-space:nowrap;overflow:hidden">4</div><div class="abs" style="left:88px;top:136px;width:64px;height:15px;background:#000;color:#fff;font-size:12.500px;line-height:17px;text-align:right;padding:0 4px;white-space:nowrap;overflow:hidden">4</div><div class="abs" style="left:153px;top:136px;width:65px;height:15px;background:#000;color:#fff;font-size:12.500px;line-height:17px;text-align:right;padding:0 3px;white-space:nowrap;overflow:hidden">44</div><div class="abs" style="left:0px;top:152px;width:85px;height:15px;background:#1f1f1b;color:#fff;font-size:12.500px;line-height:17px;text-align:right;padding:0 4px;white-space:nowrap;overflow:hidden">5</div><div class="abs" style="left:88px;top:152px;width:64px;height:15px;background:#000;color:#fff;font-size:12.500px;line-height:17px;text-align:right;padding:0 4px;white-space:nowrap;overflow:hidden">5</div><div class="abs" style="left:153px;top:152px;width:65px;height:15px;background:#000;color:#fff;font-size:12.500px;line-height:17px;text-align:right;padding:0 3px;white-space:nowrap;overflow:hidden">55</div><div class="abs" style="left:0px;top:168px;width:85px;height:15px;background:#1f1f1b;color:#fff;font-size:12.500px;line-height:17px;text-align:right;padding:0 4px;white-space:nowrap;overflow:hidden">6</div><div class="abs" style="left:88px;top:168px;width:64px;height:15px;background:#000;color:#fff;font-size:12.500px;line-height:17px;text-align:right;padding:0 4px;white-space:nowrap;overflow:hidden">6</div><div class="abs" style="left:153px;top:168px;width:65px;height:15px;background:#000;color:#fff;font-size:12.500px;line-height:17px;text-align:right;padding:0 3px;white-space:nowrap;overflow:hidden">66</div><div class="abs" style="left:0px;top:184px;width:85px;height:15px;background:#1f1f1b;color:#fff;font-size:12.500px;line-height:17px;text-align:right;padding:0 4px;white-space:nowrap;overflow:hidden">7</div><div class="abs" style="left:88px;top:184px;width:64px;height:15px;background:#0b0b0b;color:#fff;font-size:12.500px;line-height:17px;text-align:right;padding:0 4px;white-space:nowrap;overflow:hidden"></div><div class="abs" style="left:153px;top:184px;width:65px;height:15px;background:#0b0b0b;color:#fff;font-size:12.500px;line-height:17px;text-align:right;padding:0 4px;white-space:nowrap;overflow:hidden"></div><div class="abs" style="left:0px;top:200px;width:85px;height:15px;background:#1f1f1b;color:#fff;font-size:12.500px;line-height:17px;text-align:right;padding:0 4px;white-space:nowrap;overflow:hidden">8</div><div class="abs" style="left:88px;top:200px;width:64px;height:15px;background:#0b0b0b;color:#fff;font-size:12.500px;line-height:17px;text-align:right;padding:0 4px;white-space:nowrap;overflow:hidden"></div><div class="abs" style="left:153px;top:200px;width:65px;height:15px;background:#0b0b0b;color:#fff;font-size:12.500px;line-height:17px;text-align:right;padding:0 4px;white-space:nowrap;overflow:hidden"></div><div class="abs" style="left:0px;top:216px;width:85px;height:15px;background:#1f1f1b;color:#fff;font-size:12.500px;line-height:17px;text-align:right;padding:0 4px;white-space:nowrap;overflow:hidden">9</div><div class="abs" style="left:88px;top:216px;width:64px;height:15px;background:#0b0b0b;color:#fff;font-size:12.500px;line-height:17px;text-align:right;padding:0 4px;white-space:nowrap;overflow:hidden"></div><div class="abs" style="left:153px;top:216px;width:65px;height:15px;background:#0b0b0b;color:#fff;font-size:12.500px;line-height:17px;text-align:right;padding:0 4px;white-space:nowrap;overflow:hidden"></div><div class="abs" style="left:0px;top:232px;width:85px;height:15px;background:#1f1f1b;color:#fff;font-size:12.500px;line-height:17px;text-align:right;padding:0 4px;white-space:nowrap;overflow:hidden">10</div><div class="abs" style="left:88px;top:232px;width:64px;height:15px;background:#0b0b0b;color:#fff;font-size:12.500px;line-height:17px;text-align:right;padding:0 4px;white-space:nowrap;overflow:hidden"></div><div class="abs" style="left:153px;top:232px;width:65px;height:15px;background:#0b0b0b;color:#fff;font-size:12.500px;line-height:17px;text-align:right;padding:0 4px;white-space:nowrap;overflow:hidden"></div><div class="abs" style="left:0px;top:248px;width:85px;height:15px;background:#1f1f1b;color:#fff;font-size:12.500px;line-height:17px;text-align:right;padding:0 4px;white-space:nowrap;overflow:hidden">11</div><div class="abs" style="left:88px;top:248px;width:64px;height:15px;background:#0b0b0b;color:#fff;font-size:12.500px;line-height:17px;text-align:right;padding:0 4px;white-space:nowrap;overflow:hidden"></div><div class="abs" style="left:153px;top:248px;width:65px;height:15px;background:#0b0b0b;color:#fff;font-size:12.500px;line-height:17px;text-align:right;padding:0 4px;white-space:nowrap;overflow:hidden"></div><div class="abs" style="left:359px;top:0;width:18px;height:262px;background:#f0f0f0"></div><svg class="ic" style="left:364px;top:5px" width="9" height="7" viewBox="0 0 9 7"><path d="M1 5.500L4.500 2L8 5.500" fill="none" stroke="#484848" stroke-width="1.900"/></svg><div class="abs" style="left:360px;top:17px;width:15px;height:69px;background:#c9c9c9"></div><div class="abs" style="left:0;top:262px;width:377px;height:18px;background:#c3c3c3;border-top:1px solid #8a8a8a"></div><div class="abs" style="left:0px;top:263px;width:17px;height:17px;background:#f0f0f0;border-top:1px solid #fff;border-left:1px solid #fff;border-right:1px solid #6c6c6c;border-bottom:1px solid #222;box-shadow:inset -1px -1px 0 #a8a8a8"></div><div class="abs" style="left:17px;top:263px;width:17px;height:17px;background:#f0f0f0;border-top:1px solid #fff;border-left:1px solid #fff;border-right:1px solid #6c6c6c;border-bottom:1px solid #222;box-shadow:inset -1px -1px 0 #a8a8a8"></div><svg class="ic" style="left:5px;top:267px" width="26" height="8" viewBox="0 0 26 8"><path d="M5 0.500V7.500L1 4Z M19.500 0.500V7.500L23.500 4Z" fill="#5c5c5c"/></svg><svg class="ic" style="left:35px;top:263px" width="76" height="17" viewBox="0 0 76 17"><path d="M0 0H75L68.500 17H7Z" fill="#fff"/><path d="M0.700 0L7 16.500M75 0L68.500 16.500" fill="none" stroke="#000" stroke-width="1.300"/></svg><span class="t" id="sh1" style="left:45px;top:265px;font-family:'Liberation Mono',monospace;font-weight:bold;font-size:14.3px;letter-spacing:0">Sheet1</span></div></div>
<div class="win" style="left:449px;top:364px;width:506px;height:347px;background:linear-gradient(#bccbdc 0,#c8d6e4 10px,#dce6f1 27px,#d9e4ef 34px,#d8e3ef 100%);border:2px solid #b0047f;border-radius:6px 6px 2px 2px"><svg class="ic" style="left:8px;top:9px" width="16" height="16" viewBox="0 0 16 16"><rect x="1" y="1" width="14.500" height="14.500" fill="#000"/><rect x="0" y="0" width="14" height="14" fill="#fff"/><rect x="2" y="2" width="10.500" height="4.300" fill="#10e0e8"/><rect x="2" y="7.300" width="10.500" height="4" fill="#10e0e8"/><path d="M3 5L5 4L6.500 4.500L8.500 3.500L11.500 3.800M3 10.500L5 9L8 8.500L11.500 9" fill="none" stroke="#202060" stroke-width=".8"/><path d="M1.500 1.500H13M1.500 6.800H13M1.500 1.500V12" stroke="#f02020" stroke-width=".7" stroke-dasharray="1 1"/><path d="M4 9.500L7 8.300L11 8.800" fill="none" stroke="#c040e0" stroke-width=".8"/><path d="M2 13H13" stroke="#202020" stroke-width="1" stroke-dasharray="2 1"/></svg><span class="wt" id="gr" style="left:28px;top:11px">Graph4 *</span><div class="wbtn" style="left:394px;top:8px"><div class="abs" style="left:9px;top:7px;width:11px;height:5px;border:1px solid #454a5c;border-radius:1.500px;background:#fff"></div></div><div class="wbtn" style="left:428px;top:8px"><div class="abs" style="left:9px;top:3px;width:11px;height:9px;border:1px solid #454a5c;border-radius:1.500px;background:#fff"><div class="abs" style="left:2px;top:2px;width:5px;height:3px;border:1px solid #454a5c;background:#b4c0d4"></div></div></div><div class="wbtn" style="left:462px;top:8px"><svg class="ic" style="left:9px;top:3px" width="12" height="10" viewBox="0 0 12 10"><path d="M2.500 2L9.500 8M9.500 2L2.500 8" stroke="#454a5c" stroke-width="3.600" stroke-linecap="square"/><path d="M2.500 2L9.500 8M9.500 2L2.500 8" stroke="#fff" stroke-width="1.900" stroke-linecap="square"/></svg></div><div class="abs" style="left:6px;top:29px;width:491px;height:308px;background:#c0c0c0;border:1px solid #6a6a72;border-top:2px solid #666;border-bottom:2px solid #fbfcfe;border-right:2px solid #fbfcfe;overflow:hidden"><div class="abs" style="left:0;top:0;width:398px;height:305px;background:#fff"></div><div class="abs" style="left:1px;top:0;width:20px;height:20px;background:#c0c0c0;font-weight:bold;font-size:14px;line-height:23px;text-align:center">1</div><svg class="ic" style="left:0;top:0" width="398" height="304" viewBox="458 397 398 304" font-family="Liberation Sans,sans-serif"><rect x="751.500" y="408.500" width="39" height="16" fill="#fff" stroke="#000" stroke-width="1"/><rect x="753.600" y="410.600" width="25" height="11.800" fill="#fbc99a" stroke="#000" stroke-width="1.100"/><text x="781.300" y="420.200" font-size="10.600" fill="#000">B</text><rect x="535.5" y="619.76" width="36" height="31.74" fill="#fbc99a" stroke="#000" stroke-width="1.200"/><rect x="580.5" y="587.52" width="36" height="63.98" fill="#fbc99a" stroke="#000" stroke-width="1.200"/><rect x="625.5" y="555.28" width="36" height="96.22" fill="#fbc99a" stroke="#000" stroke-width="1.200"/><rect x="670.5" y="523.04" width="36" height="128.46" fill="#fbc99a" stroke="#000" stroke-width="1.200"/><rect x="715.5" y="490.79" width="36" height="160.71" fill="#fbc99a" stroke="#000" stroke-width="1.200"/><rect x="760.5" y="458.55" width="36" height="192.95" fill="#fbc99a" stroke="#000" stroke-width="1.200"/><path d="M530.500 432.500H801.500V651.500H530.500Z" fill="none" stroke="#12be12" stroke-width="1.150"/><text x="518.0" y="654.3" font-size="10" fill="#f01414" textLength="4.7" lengthAdjust="spacingAndGlyphs">0</text><text x="513.3" y="625.1" font-size="10" fill="#f01414" textLength="9.4" lengthAdjust="spacingAndGlyphs">10</text><text x="513.3" y="595.9" font-size="10" fill="#f01414" textLength="9.4" lengthAdjust="spacingAndGlyphs">20</text><text x="513.3" y="566.7" font-size="10" fill="#f01414" textLength="9.4" lengthAdjust="spacingAndGlyphs">30</text><text x="513.3" y="537.5" font-size="10" fill="#f01414" textLength="9.4" lengthAdjust="spacingAndGlyphs">40</text><text x="513.3" y="508.3" font-size="10" fill="#f01414" textLength="9.4" lengthAdjust="spacingAndGlyphs">50</text><text x="513.3" y="479.1" font-size="10" fill="#f01414" textLength="9.4" lengthAdjust="spacingAndGlyphs">60</text><text x="513.3" y="449.9" font-size="10" fill="#f01414" textLength="9.4" lengthAdjust="spacingAndGlyphs">70</text><text x="552.7" y="665" font-size="9.600" fill="#f01414" text-anchor="middle">1</text><text x="597.7" y="665" font-size="9.600" fill="#f01414" text-anchor="middle">2</text><text x="642.7" y="665" font-size="9.600" fill="#f01414" text-anchor="middle">3</text><text x="687.7" y="665" font-size="9.600" fill="#f01414" text-anchor="middle">4</text><text x="732.7" y="665" font-size="9.600" fill="#f01414" text-anchor="middle">5</text><text x="777.7" y="665" font-size="9.600" fill="#f01414" text-anchor="middle">6</text><path d="M526 652.0H530M528 637.4H530M526 622.8H530M528 608.2H530M526 593.6H530M528 579.0H530M526 564.4H530M528 549.8H530M526 535.2H530M528 520.6H530M526 506.0H530M528 491.4H530M526 476.8H530M528 462.2H530M526 447.6H530M553.5 652V655.500M598.5 652V655.500M643.5 652V655.500M688.5 652V655.500M733.5 652V655.500M778.5 652V655.500M531 652V653.500M576 652V653.500M621 652V653.500M666 652V653.500M711 652V653.500M756 652V653.500M801 652V653.500" stroke="#f01414" stroke-width="1.100"/><text x="666" y="683" font-size="10.500" fill="#000" text-anchor="middle">A</text><text transform="translate(508,541) rotate(-90)" font-size="10.500" fill="#000" text-anchor="middle">B</text><path d="M525.2 432.5L530.5 427.5L535.8 432.5L530.5 437.5Z" fill="#0a6c0a"/><path d="M660.7 432.5L666 427.5L671.3 432.5L666 437.5Z" fill="#0a6c0a"/><path d="M796.2 432.5L801.5 427.5L806.8 432.5L801.5 437.5Z" fill="#0a6c0a"/><path d="M525.2 541.5L530.5 536.5L535.8 541.5L530.5 546.5Z" fill="#0a6c0a"/><path d="M796.2 541.5L801.5 536.5L806.8 541.5L801.5 546.5Z" fill="#0a6c0a"/><path d="M525.2 651.5L530.5 646.5L535.8 651.5L530.5 656.5Z" fill="#0a6c0a"/><path d="M660.7 651.5L666 646.5L671.3 651.5L666 656.5Z" fill="#0a6c0a"/><path d="M796.2 651.5L801.5 646.5L806.8 651.5L801.5 656.5Z" fill="#0a6c0a"/><path d="M530.500 437V432.500H535" fill="none" stroke="#f4b8e8" stroke-width=".9"/><path d="M797 432.500H801.500V437" fill="none" stroke="#f4b8e8" stroke-width=".9"/><path d="M530.500 647V651.500H535" fill="none" stroke="#f4d8f0" stroke-width=".9"/><path d="M797 651.500H801.500V647" fill="none" stroke="#f4d8f0" stroke-width=".9"/><path d="M526.500 432.500H530.500M526.500 651.500H530.500" stroke="#1060e0" stroke-width=".9"/></svg></div></div>
<div class="abs" style="left:893px;top:96px;width:303px;height:169px;background:#f0f0f0;border:2px solid #fbfbfb;border-right-color:#707070;border-bottom-color:#707070"><div class="abs" style="left:4px;top:5px;width:38px;height:19px;background:#00007c"></div><div class="abs" style="left:5px;top:6px;width:17px;height:17px;background:#f9c984"></div><div class="abs" style="left:23px;top:6px;width:18px;height:17px;background:#fdf1cc"></div><div class="sw" style="left:6px;top:7px;background:#000000"></div><div class="sw" style="left:24px;top:7px;background:#ff0000"></div><div class="sw" style="left:42px;top:7px;background:#00ff00"></div><div class="sw" style="left:60px;top:7px;background:#0000ff"></div><div class="sw" style="left:78px;top:7px;background:#00ffff"></div><div class="sw" style="left:96px;top:7px;background:#ff00ff"></div><div class="sw" style="left:114px;top:7px;background:#ffff00"></div><div class="sw" style="left:132px;top:7px;background:#808000"></div><div class="sw" style="left:150px;top:7px;background:#000080"></div><div class="sw" style="left:168px;top:7px;background:#800080"></div><div class="sw" style="left:186px;top:7px;background:#800000"></div><div class="sw" style="left:204px;top:7px;background:#008000"></div><div class="sw" style="left:222px;top:7px;background:#008080"></div><div class="sw" style="left:240px;top:7px;background:#0000a0"></div><div class="sw" style="left:258px;top:7px;background:#ff8000"></div><div class="sw" style="left:276px;top:7px;background:#8000ff"></div><div class="sw" style="left:6px;top:25px;background:#ff0080"></div><div class="sw" style="left:24px;top:25px;background:#ffffff"></div><div class="sw" style="left:42px;top:25px;background:#c0c0c0"></div><div class="sw" style="left:60px;top:25px;background:#808080"></div><div class="sw" style="left:78px;top:25px;background:#ffff80"></div><div class="sw" style="left:96px;top:25px;background:#80ffff"></div><div class="sw" style="left:114px;top:25px;background:#ff80ff"></div><div class="sw" style="left:132px;top:25px;background:#404040"></div><span class="pt" id="p1" style="left:6px;top:46px">More colors: S01 Gray Scale</span><svg class="ic" style="left:173px;top:52px" width="11" height="6" viewBox="0 0 11 6"><path d="M0 0H11L5.500 6Z" fill="#808080"/></svg><div class="sw" style="left:6px;top:65px;background:#000"></div><div class="sw" style="left:24px;top:65px;background:#404040"></div><div class="sw" style="left:42px;top:65px;background:#808080"></div><div class="sw" style="left:60px;top:65px;background:#c0c0c0"></div><div class="sw" style="left:78px;top:65px;background:#fff"></div><span class="pt" id="p2" style="left:6px;top:86px">Custom</span><svg class="ic" style="left:52px;top:92px" width="11" height="6" viewBox="0 0 11 6"><path d="M0 0H11L5.500 6Z" fill="#808080"/></svg><div class="sw" style="left:6px;top:105px;background:#f0f0f0;border-color:#c4c4c4"></div><span class="pt" id="p3" style="left:6px;top:127px">Recent colors</span><div class="sw" style="left:6px;top:145px;background:#ff0000"></div><div class="sw" style="left:24px;top:145px;background:#404040"></div><div class="sw" style="left:42px;top:145px;background:#000"></div><div class="sw" style="left:60px;top:145px;background:#808080"></div><div class="sw" style="left:78px;top:145px;background:#000"></div></div>
<svg class="ic" style="left:820px;top:95px" width="140" height="140" viewBox="820 95 140 140"><path d="M831.700 226.700L909.600 130.600L904.400 129.500L925.500 113L913.600 137.100L912 133.300L832.900 227.700Z" fill="#5a0a0a" opacity=".55" transform="translate(1.300,1.300)"/><path d="M831.700 226.700L909.600 130.600L904.400 129.500L925.500 113L913.600 137.100L912 133.300L832.900 227.700Z" fill="#ff0000"/></svg>
<svg class="ic" style="left:1070px;top:760px" width="56" height="52" viewBox="1070 760 56 52"><defs><linearGradient id="wg1" x1="0" y1="1" x2="1" y2="0"><stop offset="0" stop-color="#3a70c4"/><stop offset=".6" stop-color="#4a9ade"/><stop offset="1" stop-color="#52b8ec"/></linearGradient><linearGradient id="wg2" x1="0" y1="1" x2="1" y2="0"><stop offset="0" stop-color="#e8e030"/><stop offset=".35" stop-color="#8cc850"/><stop offset=".7" stop-color="#4cae64"/><stop offset="1" stop-color="#44a868"/></linearGradient></defs><path d="M1120 767C1102 768 1082 778 1078 790C1076 797 1082 800 1090 798C1084 796 1083 791 1086 786C1091 778 1104 771 1120 767Z" fill="url(#wg1)"/><path d="M1101 783.500C1094 782 1086 786 1087 792C1088 797 1095 797 1099 793C1094 794.500 1090 793 1091 789.500C1092 786 1097 785 1101 783.500Z" fill="#3c74c6"/><path d="M1080 806.500C1098 804 1114 796 1117.500 787C1119 781 1110 780.500 1100 783C1107 783.500 1110 786 1108 790C1104 797 1094 803 1080 806.500Z" fill="url(#wg2)"/></svg><span class="t" id="wm1" style="left:1120px;top:768px;font-family:'Liberation Sans','Noto Sans CJK SC',sans-serif;font-weight:bold;font-size:21px;color:#4a86c4;letter-spacing:0px">极光下载站</span><span class="t" id="wm2" style="left:1121px;top:793px;font-size:16.600px;color:#4aa868;letter-spacing:0;-webkit-text-stroke:.35px #4aa868">www.xz7.com</span>
</body></html>
